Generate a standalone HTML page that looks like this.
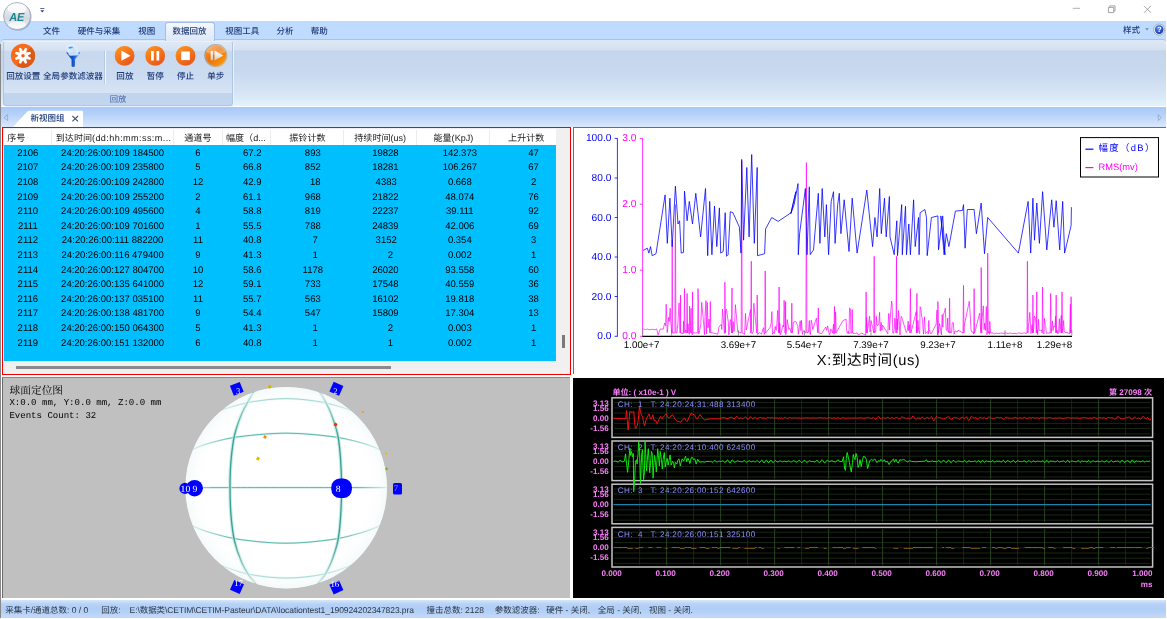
<!DOCTYPE html>
<html lang="zh-CN"><head><meta charset="utf-8"><title>AE</title>
<style>
html,body{margin:0;padding:0;background:#fff;}
body{width:1167px;height:619px;position:relative;overflow:hidden;font-family:"Liberation Sans","Noto Sans CJK SC",sans-serif;}
.t{position:absolute;white-space:pre;margin:0;padding:0;}
.b{position:absolute;box-sizing:border-box;}
svg{position:absolute;left:0;top:0;overflow:visible;}
svg text{white-space:pre;}
#root{position:absolute;left:0;top:0;width:1167px;height:619px;overflow:hidden;will-change:transform;text-rendering:geometricPrecision;}
</style></head><body><div id="root">
<div class="b" style="left:0px;top:21px;width:1166px;height:24px;background:#bfdbff;"></div>
<div class="b" style="left:1px;top:38.7px;width:1165px;height:67.8px;background:linear-gradient(#dee8f5 0px,#d5e1f2 9.6px,#c5d6ec 11px,#c8d9ee 32px,#d9e7f6 56px,#def0fb 62px,#e2f4fc 67px);border-top:1px solid #a6c3ec;border-radius:3px 3px 0 0;"></div>
<div class="b" style="left:0px;top:106.5px;width:1166px;height:0.9px;background:#9fbbdf;"></div>
<div class="b" style="left:0px;top:107.3px;width:1166px;height:19.7px;background:linear-gradient(#a6c9f8 0,#b4d1f9 7px,#d9e7fb 19.7px);"></div>
<div class="b" style="left:0px;top:43.6px;width:1px;height:574.2px;background:#888;"></div>
<div class="b" style="left:2.5px;top:41px;width:230.5px;height:65px;background:linear-gradient(#dfe9f6 0,#d6e2f2 8.2px,#c8d8ee 9.6px,#cbdbf0 33px,#d6e4f5 51px,#c0d4ee 51.5px,#c2d6ef 65px);border:1px solid #aec6e6;border-top-color:#e8f0fa;border-radius:3px;box-shadow:1px 1px 0 #e9f2fc;"></div>
<div class="b" style="left:105px;top:50.5px;width:1px;height:33px;background:#f4f8fd;box-shadow:-1px 0 0 #b5c9e4;"></div>
<div class="b" style="left:164.5px;top:22px;width:50px;height:19px;background:linear-gradient(#f4f8fe,#dde7f5);border:1px solid #a4bfe6;border-bottom:none;border-radius:3px 3px 0 0;"></div>
<svg width="1167" height="130" viewBox="0 0 1167 130">
<defs>
<linearGradient id="gApp" x1="0" y1="0" x2="0" y2="1"><stop offset="0" stop-color="#f3f5f9"/><stop offset="0.42" stop-color="#dde1ea"/><stop offset="0.58" stop-color="#d3d8e3"/><stop offset="0.82" stop-color="#e9ecf2"/><stop offset="1" stop-color="#fbfcfd"/></linearGradient>
<linearGradient id="gOr" x1="0" y1="0" x2="0.7" y2="1"><stop offset="0" stop-color="#ff9a1f"/><stop offset="0.55" stop-color="#f4741a"/><stop offset="1" stop-color="#e8561b"/></linearGradient>
<linearGradient id="gOr2" x1="0" y1="0" x2="1" y2="1"><stop offset="0" stop-color="#f59a3c"/><stop offset="0.45" stop-color="#ec7208"/><stop offset="0.8" stop-color="#f98e06"/><stop offset="1" stop-color="#ffbe10"/></linearGradient>
<linearGradient id="gRing" x1="0" y1="0" x2="1" y2="1"><stop offset="0" stop-color="#8f929e"/><stop offset="0.6" stop-color="#b7a692"/><stop offset="1" stop-color="#d9b98a"/></linearGradient>
<linearGradient id="gGly" x1="0" y1="0" x2="0" y2="1"><stop offset="0" stop-color="#fbfaf8"/><stop offset="0.5" stop-color="#eceae6"/><stop offset="1" stop-color="#c9c4bb"/></linearGradient>
<linearGradient id="gFun" x1="0" y1="0" x2="1" y2="0"><stop offset="0" stop-color="#1a5ad2"/><stop offset="0.45" stop-color="#1450c4"/><stop offset="0.75" stop-color="#2f78e6"/><stop offset="1" stop-color="#1a56c8"/></linearGradient>
<radialGradient id="gHelp" cx="0.4" cy="0.35" r="0.7"><stop offset="0" stop-color="#5b8df0"/><stop offset="1" stop-color="#1233a8"/></radialGradient>
<clipPath id="cGear"><circle cx="23" cy="55.8" r="12.1"/></clipPath>
</defs>
<circle cx="17.7" cy="16.9" r="13.9" fill="#7d8798" opacity="0.5"/>
<circle cx="17.1" cy="16" r="13.5" fill="url(#gApp)" stroke="#a0a9bb" stroke-width="0.9"/>
<ellipse cx="17.1" cy="8.6" rx="9.6" ry="5" fill="#ffffff" opacity="0.75"/>
<ellipse cx="17.1" cy="25" rx="9" ry="3.6" fill="#ffffff" opacity="0.5"/>
<text x="9.2" y="20.5" font-family="Liberation Sans,sans-serif" font-size="11.6" font-weight="bold" font-style="italic" fill="#1b888c" textLength="15.2" lengthAdjust="spacingAndGlyphs">AE</text>
<path d="M40.2 8.2h4.2v0.9h-4.2z M40.4 10.3h3.8l-1.9 2.3z" fill="#2a3f7a"/>
<path d="M1072.8 8.3h7.2" stroke="#a8a8a8" stroke-width="0.9" fill="none"/>
<path d="M1108.4 7.4h5.3v5.2h-5.3z M1109.8 7.2v-1.3h5.2v5.2h-1.2" stroke="#9a9a9a" stroke-width="0.9" fill="none"/>
<path d="M1144 5.8l7 7M1151 5.8l-7 7" stroke="#9a9a9a" stroke-width="0.9" fill="none"/>
<path d="M1145.2 28.2h3.6l-1.8 2.2z" fill="#6d86b8"/>
<circle cx="1159.2" cy="29.6" r="5.6" fill="#e9eef8" stroke="#9aa6bd" stroke-width="0.9"/>
<circle cx="1159.2" cy="29.6" r="4.3" fill="url(#gHelp)"/>
<text x="1159.3" y="32.4" text-anchor="middle" font-family="Liberation Sans,sans-serif" font-size="7.6" font-weight="bold" fill="#fff">?</text>
<circle cx="23" cy="55.8" r="12.1" fill="#fa6a1b"/>
<path clip-path="url(#cGear)" d="M23 55.8 L31 47.5 L40 58 L30 72 L17 66z" fill="#da5a18"/>
<path d="M23.26 50.91 L25.16 47.78 L27.14 48.61 L26.28 52.16 L26.64 52.52 L30.19 51.66 L31.02 53.64 L27.89 55.54 L27.89 56.06 L31.02 57.96 L30.19 59.94 L26.64 59.08 L26.28 59.44 L27.14 62.99 L25.16 63.82 L23.26 60.69 L22.74 60.69 L20.84 63.82 L18.86 62.99 L19.72 59.44 L19.36 59.08 L15.81 59.94 L14.98 57.96 L18.11 56.06 L18.11 55.54 L14.98 53.64 L15.81 51.66 L19.36 52.52 L19.72 52.16 L18.86 48.61 L20.84 47.78 L22.74 50.91z" fill="#fff"/>
<circle cx="23" cy="55.8" r="1.75" fill="#ea631b"/>
<path d="M66.1 52.5 L80.2 52.5 L75 59.4 L74.9 66.3 Q73.2 67.5 71.6 66.3 L71.5 59.4z" fill="url(#gFun)"/>
<path d="M74.2 59.6 L78.6 53.4 L79.6 53.2 L74.9 59.8z" fill="#6fa8f5" opacity="0.8"/>
<path d="M67.3 46.4 Q67.2 45.8 68 45.7 L73.2 45.2 Q75.4 45.4 76.9 47.6 L78.3 54 Q78.3 54.8 77.4 54.9 L70.4 55.3 Q69.4 55.2 69 54.4z" fill="#d3e6fb" fill-opacity="0.93" stroke="#eef6fe" stroke-width="0.7"/>
<path d="M68.5 47.1 L72.6 46.5 L72.9 48 L68.9 48.7z" fill="#3f9dfa"/>
<path d="M72.9 47.2 L74.4 54.6" stroke="#b9d6f7" stroke-width="0.7" fill="none"/>
<circle cx="124.6" cy="56.1" r="10" fill="#e0621a" opacity="0.35"/>
<circle cx="124.6" cy="55.7" r="9.8" fill="url(#gOr)"/>
<circle cx="155.2" cy="56.1" r="10" fill="#e0621a" opacity="0.35"/>
<circle cx="155.2" cy="55.7" r="9.8" fill="url(#gOr)"/>
<circle cx="185.5" cy="56.1" r="10" fill="#e0621a" opacity="0.35"/>
<circle cx="185.5" cy="55.7" r="9.8" fill="url(#gOr)"/>
<path d="M121.4 50.6 L130.6 55.7 L121.4 60.8z" fill="#fff"/>
<path d="M151.1 51h2.7v9.6h-2.7z M156.5 51h2.7v9.6h-2.7z" fill="#fff"/>
<path d="M181.2 51.5h8.6v8.6h-8.6z" fill="#fff"/>
<circle cx="215.8" cy="55.6" r="10.9" fill="#f29a3a" stroke="url(#gRing)" stroke-width="1.3"/>
<circle cx="215.8" cy="55.6" r="10.1" fill="url(#gOr2)"/>
<path d="M205.8 52 A10.3 10.3 0 0 1 225.8 52 Q215.8 57.5 205.8 52z" fill="#fff" opacity="0.28"/>
<path d="M210.7 51h2.2v9.3h-2.2z M214.5 50.6 L223.4 55.6 L214.5 60.6z" fill="url(#gGly)"/>
<path d="M12.8 127 L27.6 111.2 Q28 110.8 28.8 110.8 L82 110.8 Q83 110.8 83 111.8 L83 127z" fill="#fff"/>
<path d="M4 117.6 L7.6 114.6 L7.6 120.6z" fill="none" stroke="#8ea6cc" stroke-width="0.8"/>
<path d="M1158.3 114.6 L1161.4 117.6 L1158.3 120.6z" fill="none" stroke="#8ea6cc" stroke-width="0.8"/>
<path d="M72.4 116 L78 121.4 M78 116 L72.4 121.4" stroke="#44557a" stroke-width="1.1" fill="none"/>
</svg>
<div class="t" style="top:26.10px;font-size:8.5px;line-height:11.9px;color:#1e3a78;left:43.00px;font-weight:500;">文件</div>
<div class="t" style="top:26.10px;font-size:8.5px;line-height:11.9px;color:#1e3a78;left:77.80px;font-weight:500;">硬件与采集</div>
<div class="t" style="top:26.10px;font-size:8.5px;line-height:11.9px;color:#1e3a78;left:138.20px;font-weight:500;">视图</div>
<div class="t" style="top:26.10px;font-size:8.5px;line-height:11.9px;color:#1e3a78;left:172.60px;font-weight:500;">数据回放</div>
<div class="t" style="top:26.10px;font-size:8.5px;line-height:11.9px;color:#1e3a78;left:225.30px;font-weight:500;">视图工具</div>
<div class="t" style="top:26.10px;font-size:8.5px;line-height:11.9px;color:#1e3a78;left:276.60px;font-weight:500;">分析</div>
<div class="t" style="top:26.10px;font-size:8.5px;line-height:11.9px;color:#1e3a78;left:310.80px;font-weight:500;">帮助</div>
<div class="t" style="top:25.10px;font-size:8.5px;line-height:11.9px;color:#1e3a78;left:1123.00px;font-weight:500;">样式</div>
<div class="t" style="top:71.27px;font-size:8.55px;line-height:11.97px;color:#1e3a78;left:-276.70px;width:600px;text-align:center;font-weight:500;">回放设置</div>
<div class="t" style="top:71.27px;font-size:8.55px;line-height:11.97px;color:#1e3a78;left:-227.00px;width:600px;text-align:center;font-weight:500;">全局参数滤波器</div>
<div class="t" style="top:71.27px;font-size:8.55px;line-height:11.97px;color:#1e3a78;left:-175.10px;width:600px;text-align:center;font-weight:500;">回放</div>
<div class="t" style="top:71.27px;font-size:8.55px;line-height:11.97px;color:#1e3a78;left:-144.70px;width:600px;text-align:center;font-weight:500;">暂停</div>
<div class="t" style="top:71.27px;font-size:8.55px;line-height:11.97px;color:#1e3a78;left:-114.50px;width:600px;text-align:center;font-weight:500;">停止</div>
<div class="t" style="top:71.27px;font-size:8.55px;line-height:11.97px;color:#1e3a78;left:-84.20px;width:600px;text-align:center;font-weight:500;">单步</div>
<div class="t" style="top:94.44px;font-size:8.3px;line-height:11.62px;color:#3f5e9e;left:-182.00px;width:600px;text-align:center;">回放</div>
<div class="t" style="top:112.70px;font-size:8.5px;line-height:11.9px;color:#1e3a78;left:30.50px;font-weight:500;">新视图组</div>
<div class="b" style="left:2.4px;top:127px;width:568.4px;height:247.6px;border:1.8px solid #f00000;background:#f0f0f0;"></div>
<div class="b" style="left:4.2px;top:128.8px;width:552.2px;height:16px;background:#fff;"></div>
<div class="b" style="left:4.2px;top:144.7px;width:552.2px;height:216px;background:#00bfff;"></div>
<div class="b" style="left:561.6px;top:335.2px;width:3px;height:12.4px;background:#7a7a7a;"></div>
<div class="b" style="left:16px;top:365.8px;width:375px;height:2.9px;background:#8a8a8a;"></div>
<div class="b" style="left:51.1px;top:129.5px;width:1px;height:15px;background:#ececec;"></div>
<div class="b" style="left:172.9px;top:129.5px;width:1px;height:15px;background:#ececec;"></div>
<div class="b" style="left:221.9px;top:129.5px;width:1px;height:15px;background:#ececec;"></div>
<div class="b" style="left:269.7px;top:129.5px;width:1px;height:15px;background:#ececec;"></div>
<div class="b" style="left:343.3px;top:129.5px;width:1px;height:15px;background:#ececec;"></div>
<div class="b" style="left:415.7px;top:129.5px;width:1px;height:15px;background:#ececec;"></div>
<div class="b" style="left:488.9px;top:129.5px;width:1px;height:15px;background:#ececec;"></div>
<div class="t" style="top:131.91px;font-size:9.05px;line-height:12.67px;color:#1a1a1a;left:7.30px;">序号</div>
<div class="t" style="top:131.91px;font-size:9.05px;line-height:12.67px;color:#1a1a1a;left:55.80px;">到达时间<span style="letter-spacing:0.42px">(dd:hh:mm:ss:m...</span></div>
<div class="t" style="top:131.91px;font-size:9.05px;line-height:12.67px;color:#1a1a1a;left:-102.10px;width:600px;text-align:center;">通道号</div>
<div class="t" style="top:131.91px;font-size:9.05px;line-height:12.67px;color:#1a1a1a;left:226.00px;">幅度（d...</div>
<div class="t" style="top:131.91px;font-size:9.05px;line-height:12.67px;color:#1a1a1a;left:7.40px;width:600px;text-align:center;">振铃计数</div>
<div class="t" style="top:131.91px;font-size:9.05px;line-height:12.67px;color:#1a1a1a;left:80.20px;width:600px;text-align:center;">持续时间(us)</div>
<div class="t" style="top:131.91px;font-size:9.05px;line-height:12.67px;color:#1a1a1a;left:153.40px;width:600px;text-align:center;">能量(KpJ)</div>
<div class="t" style="top:131.91px;font-size:9.05px;line-height:12.67px;color:#1a1a1a;left:226.20px;width:600px;text-align:center;">上升计数</div>
<div class="t" style="top:146.85px;font-size:9.5px;line-height:13.3px;color:#000;left:-272.20px;width:600px;text-align:center;">2106</div>
<div class="t" style="top:146.85px;font-size:9.5px;line-height:13.3px;color:#000;left:-187.40px;width:600px;text-align:center;">24:20:26:00:109 184500</div>
<div class="t" style="top:146.85px;font-size:9.5px;line-height:13.3px;color:#000;left:-102.00px;width:600px;text-align:center;">6</div>
<div class="t" style="top:146.85px;font-size:9.5px;line-height:13.3px;color:#000;left:-47.80px;width:600px;text-align:center;">67.2</div>
<div class="t" style="top:146.85px;font-size:9.5px;line-height:13.3px;color:#000;left:12.80px;width:600px;text-align:center;">893</div>
<div class="t" style="top:146.85px;font-size:9.5px;line-height:13.3px;color:#000;left:85.40px;width:600px;text-align:center;">19828</div>
<div class="t" style="top:146.85px;font-size:9.5px;line-height:13.3px;color:#000;left:159.80px;width:600px;text-align:center;">142.373</div>
<div class="t" style="top:146.85px;font-size:9.5px;line-height:13.3px;color:#000;left:233.60px;width:600px;text-align:center;">47</div>
<div class="t" style="top:161.44px;font-size:9.5px;line-height:13.3px;color:#000;left:-272.20px;width:600px;text-align:center;">2107</div>
<div class="t" style="top:161.44px;font-size:9.5px;line-height:13.3px;color:#000;left:-187.40px;width:600px;text-align:center;">24:20:26:00:109 235800</div>
<div class="t" style="top:161.44px;font-size:9.5px;line-height:13.3px;color:#000;left:-102.00px;width:600px;text-align:center;">5</div>
<div class="t" style="top:161.44px;font-size:9.5px;line-height:13.3px;color:#000;left:-47.80px;width:600px;text-align:center;">66.8</div>
<div class="t" style="top:161.44px;font-size:9.5px;line-height:13.3px;color:#000;left:12.80px;width:600px;text-align:center;">852</div>
<div class="t" style="top:161.44px;font-size:9.5px;line-height:13.3px;color:#000;left:85.40px;width:600px;text-align:center;">18281</div>
<div class="t" style="top:161.44px;font-size:9.5px;line-height:13.3px;color:#000;left:159.80px;width:600px;text-align:center;">106.267</div>
<div class="t" style="top:161.44px;font-size:9.5px;line-height:13.3px;color:#000;left:233.60px;width:600px;text-align:center;">67</div>
<div class="t" style="top:176.04px;font-size:9.5px;line-height:13.3px;color:#000;left:-272.20px;width:600px;text-align:center;">2108</div>
<div class="t" style="top:176.04px;font-size:9.5px;line-height:13.3px;color:#000;left:-187.40px;width:600px;text-align:center;">24:20:26:00:109 242800</div>
<div class="t" style="top:176.04px;font-size:9.5px;line-height:13.3px;color:#000;left:-102.00px;width:600px;text-align:center;">12</div>
<div class="t" style="top:176.04px;font-size:9.5px;line-height:13.3px;color:#000;left:-47.80px;width:600px;text-align:center;">42.9</div>
<div class="t" style="top:176.04px;font-size:9.5px;line-height:13.3px;color:#000;left:15.20px;width:600px;text-align:center;">18</div>
<div class="t" style="top:176.04px;font-size:9.5px;line-height:13.3px;color:#000;left:86.20px;width:600px;text-align:center;">4383</div>
<div class="t" style="top:176.04px;font-size:9.5px;line-height:13.3px;color:#000;left:159.80px;width:600px;text-align:center;">0.668</div>
<div class="t" style="top:176.04px;font-size:9.5px;line-height:13.3px;color:#000;left:233.60px;width:600px;text-align:center;">2</div>
<div class="t" style="top:190.63px;font-size:9.5px;line-height:13.3px;color:#000;left:-272.20px;width:600px;text-align:center;">2109</div>
<div class="t" style="top:190.63px;font-size:9.5px;line-height:13.3px;color:#000;left:-187.40px;width:600px;text-align:center;">24:20:26:00:109 255200</div>
<div class="t" style="top:190.63px;font-size:9.5px;line-height:13.3px;color:#000;left:-102.00px;width:600px;text-align:center;">2</div>
<div class="t" style="top:190.63px;font-size:9.5px;line-height:13.3px;color:#000;left:-47.80px;width:600px;text-align:center;">61.1</div>
<div class="t" style="top:190.63px;font-size:9.5px;line-height:13.3px;color:#000;left:12.80px;width:600px;text-align:center;">968</div>
<div class="t" style="top:190.63px;font-size:9.5px;line-height:13.3px;color:#000;left:85.40px;width:600px;text-align:center;">21822</div>
<div class="t" style="top:190.63px;font-size:9.5px;line-height:13.3px;color:#000;left:159.80px;width:600px;text-align:center;">48.074</div>
<div class="t" style="top:190.63px;font-size:9.5px;line-height:13.3px;color:#000;left:233.60px;width:600px;text-align:center;">76</div>
<div class="t" style="top:205.22px;font-size:9.5px;line-height:13.3px;color:#000;left:-272.20px;width:600px;text-align:center;">2110</div>
<div class="t" style="top:205.22px;font-size:9.5px;line-height:13.3px;color:#000;left:-187.40px;width:600px;text-align:center;">24:20:26:00:109 495600</div>
<div class="t" style="top:205.22px;font-size:9.5px;line-height:13.3px;color:#000;left:-102.00px;width:600px;text-align:center;">4</div>
<div class="t" style="top:205.22px;font-size:9.5px;line-height:13.3px;color:#000;left:-47.80px;width:600px;text-align:center;">58.8</div>
<div class="t" style="top:205.22px;font-size:9.5px;line-height:13.3px;color:#000;left:12.80px;width:600px;text-align:center;">819</div>
<div class="t" style="top:205.22px;font-size:9.5px;line-height:13.3px;color:#000;left:85.40px;width:600px;text-align:center;">22237</div>
<div class="t" style="top:205.22px;font-size:9.5px;line-height:13.3px;color:#000;left:159.80px;width:600px;text-align:center;">39.111</div>
<div class="t" style="top:205.22px;font-size:9.5px;line-height:13.3px;color:#000;left:233.60px;width:600px;text-align:center;">92</div>
<div class="t" style="top:219.81px;font-size:9.5px;line-height:13.3px;color:#000;left:-272.20px;width:600px;text-align:center;">2111</div>
<div class="t" style="top:219.81px;font-size:9.5px;line-height:13.3px;color:#000;left:-187.40px;width:600px;text-align:center;">24:20:26:00:109 701600</div>
<div class="t" style="top:219.81px;font-size:9.5px;line-height:13.3px;color:#000;left:-102.00px;width:600px;text-align:center;">1</div>
<div class="t" style="top:219.81px;font-size:9.5px;line-height:13.3px;color:#000;left:-47.80px;width:600px;text-align:center;">55.5</div>
<div class="t" style="top:219.81px;font-size:9.5px;line-height:13.3px;color:#000;left:12.80px;width:600px;text-align:center;">788</div>
<div class="t" style="top:219.81px;font-size:9.5px;line-height:13.3px;color:#000;left:85.40px;width:600px;text-align:center;">24839</div>
<div class="t" style="top:219.81px;font-size:9.5px;line-height:13.3px;color:#000;left:159.80px;width:600px;text-align:center;">42.006</div>
<div class="t" style="top:219.81px;font-size:9.5px;line-height:13.3px;color:#000;left:233.60px;width:600px;text-align:center;">69</div>
<div class="t" style="top:234.41px;font-size:9.5px;line-height:13.3px;color:#000;left:-272.20px;width:600px;text-align:center;">2112</div>
<div class="t" style="top:234.41px;font-size:9.5px;line-height:13.3px;color:#000;left:-187.40px;width:600px;text-align:center;">24:20:26:00:111 882200</div>
<div class="t" style="top:234.41px;font-size:9.5px;line-height:13.3px;color:#000;left:-102.00px;width:600px;text-align:center;">11</div>
<div class="t" style="top:234.41px;font-size:9.5px;line-height:13.3px;color:#000;left:-47.80px;width:600px;text-align:center;">40.8</div>
<div class="t" style="top:234.41px;font-size:9.5px;line-height:13.3px;color:#000;left:15.20px;width:600px;text-align:center;">7</div>
<div class="t" style="top:234.41px;font-size:9.5px;line-height:13.3px;color:#000;left:86.20px;width:600px;text-align:center;">3152</div>
<div class="t" style="top:234.41px;font-size:9.5px;line-height:13.3px;color:#000;left:159.80px;width:600px;text-align:center;">0.354</div>
<div class="t" style="top:234.41px;font-size:9.5px;line-height:13.3px;color:#000;left:233.60px;width:600px;text-align:center;">3</div>
<div class="t" style="top:249.00px;font-size:9.5px;line-height:13.3px;color:#000;left:-272.20px;width:600px;text-align:center;">2113</div>
<div class="t" style="top:249.00px;font-size:9.5px;line-height:13.3px;color:#000;left:-187.40px;width:600px;text-align:center;">24:20:26:00:116 479400</div>
<div class="t" style="top:249.00px;font-size:9.5px;line-height:13.3px;color:#000;left:-102.00px;width:600px;text-align:center;">9</div>
<div class="t" style="top:249.00px;font-size:9.5px;line-height:13.3px;color:#000;left:-47.80px;width:600px;text-align:center;">41.3</div>
<div class="t" style="top:249.00px;font-size:9.5px;line-height:13.3px;color:#000;left:15.20px;width:600px;text-align:center;">1</div>
<div class="t" style="top:249.00px;font-size:9.5px;line-height:13.3px;color:#000;left:90.40px;width:600px;text-align:center;">2</div>
<div class="t" style="top:249.00px;font-size:9.5px;line-height:13.3px;color:#000;left:159.80px;width:600px;text-align:center;">0.002</div>
<div class="t" style="top:249.00px;font-size:9.5px;line-height:13.3px;color:#000;left:233.60px;width:600px;text-align:center;">1</div>
<div class="t" style="top:263.59px;font-size:9.5px;line-height:13.3px;color:#000;left:-272.20px;width:600px;text-align:center;">2114</div>
<div class="t" style="top:263.59px;font-size:9.5px;line-height:13.3px;color:#000;left:-187.40px;width:600px;text-align:center;">24:20:26:00:127 804700</div>
<div class="t" style="top:263.59px;font-size:9.5px;line-height:13.3px;color:#000;left:-102.00px;width:600px;text-align:center;">10</div>
<div class="t" style="top:263.59px;font-size:9.5px;line-height:13.3px;color:#000;left:-47.80px;width:600px;text-align:center;">58.6</div>
<div class="t" style="top:263.59px;font-size:9.5px;line-height:13.3px;color:#000;left:12.80px;width:600px;text-align:center;">1178</div>
<div class="t" style="top:263.59px;font-size:9.5px;line-height:13.3px;color:#000;left:85.40px;width:600px;text-align:center;">26020</div>
<div class="t" style="top:263.59px;font-size:9.5px;line-height:13.3px;color:#000;left:159.80px;width:600px;text-align:center;">93.558</div>
<div class="t" style="top:263.59px;font-size:9.5px;line-height:13.3px;color:#000;left:233.60px;width:600px;text-align:center;">60</div>
<div class="t" style="top:278.19px;font-size:9.5px;line-height:13.3px;color:#000;left:-272.20px;width:600px;text-align:center;">2115</div>
<div class="t" style="top:278.19px;font-size:9.5px;line-height:13.3px;color:#000;left:-187.40px;width:600px;text-align:center;">24:20:26:00:135 641000</div>
<div class="t" style="top:278.19px;font-size:9.5px;line-height:13.3px;color:#000;left:-102.00px;width:600px;text-align:center;">12</div>
<div class="t" style="top:278.19px;font-size:9.5px;line-height:13.3px;color:#000;left:-47.80px;width:600px;text-align:center;">59.1</div>
<div class="t" style="top:278.19px;font-size:9.5px;line-height:13.3px;color:#000;left:12.80px;width:600px;text-align:center;">733</div>
<div class="t" style="top:278.19px;font-size:9.5px;line-height:13.3px;color:#000;left:85.40px;width:600px;text-align:center;">17548</div>
<div class="t" style="top:278.19px;font-size:9.5px;line-height:13.3px;color:#000;left:159.80px;width:600px;text-align:center;">40.559</div>
<div class="t" style="top:278.19px;font-size:9.5px;line-height:13.3px;color:#000;left:233.60px;width:600px;text-align:center;">36</div>
<div class="t" style="top:292.78px;font-size:9.5px;line-height:13.3px;color:#000;left:-272.20px;width:600px;text-align:center;">2116</div>
<div class="t" style="top:292.78px;font-size:9.5px;line-height:13.3px;color:#000;left:-187.40px;width:600px;text-align:center;">24:20:26:00:137 035100</div>
<div class="t" style="top:292.78px;font-size:9.5px;line-height:13.3px;color:#000;left:-102.00px;width:600px;text-align:center;">11</div>
<div class="t" style="top:292.78px;font-size:9.5px;line-height:13.3px;color:#000;left:-47.80px;width:600px;text-align:center;">55.7</div>
<div class="t" style="top:292.78px;font-size:9.5px;line-height:13.3px;color:#000;left:12.80px;width:600px;text-align:center;">563</div>
<div class="t" style="top:292.78px;font-size:9.5px;line-height:13.3px;color:#000;left:85.40px;width:600px;text-align:center;">16102</div>
<div class="t" style="top:292.78px;font-size:9.5px;line-height:13.3px;color:#000;left:159.80px;width:600px;text-align:center;">19.818</div>
<div class="t" style="top:292.78px;font-size:9.5px;line-height:13.3px;color:#000;left:233.60px;width:600px;text-align:center;">38</div>
<div class="t" style="top:307.37px;font-size:9.5px;line-height:13.3px;color:#000;left:-272.20px;width:600px;text-align:center;">2117</div>
<div class="t" style="top:307.37px;font-size:9.5px;line-height:13.3px;color:#000;left:-187.40px;width:600px;text-align:center;">24:20:26:00:138 481700</div>
<div class="t" style="top:307.37px;font-size:9.5px;line-height:13.3px;color:#000;left:-102.00px;width:600px;text-align:center;">9</div>
<div class="t" style="top:307.37px;font-size:9.5px;line-height:13.3px;color:#000;left:-47.80px;width:600px;text-align:center;">54.4</div>
<div class="t" style="top:307.37px;font-size:9.5px;line-height:13.3px;color:#000;left:12.80px;width:600px;text-align:center;">547</div>
<div class="t" style="top:307.37px;font-size:9.5px;line-height:13.3px;color:#000;left:85.40px;width:600px;text-align:center;">15809</div>
<div class="t" style="top:307.37px;font-size:9.5px;line-height:13.3px;color:#000;left:159.80px;width:600px;text-align:center;">17.304</div>
<div class="t" style="top:307.37px;font-size:9.5px;line-height:13.3px;color:#000;left:233.60px;width:600px;text-align:center;">13</div>
<div class="t" style="top:321.97px;font-size:9.5px;line-height:13.3px;color:#000;left:-272.20px;width:600px;text-align:center;">2118</div>
<div class="t" style="top:321.97px;font-size:9.5px;line-height:13.3px;color:#000;left:-187.40px;width:600px;text-align:center;">24:20:26:00:150 064300</div>
<div class="t" style="top:321.97px;font-size:9.5px;line-height:13.3px;color:#000;left:-102.00px;width:600px;text-align:center;">5</div>
<div class="t" style="top:321.97px;font-size:9.5px;line-height:13.3px;color:#000;left:-47.80px;width:600px;text-align:center;">41.3</div>
<div class="t" style="top:321.97px;font-size:9.5px;line-height:13.3px;color:#000;left:15.20px;width:600px;text-align:center;">1</div>
<div class="t" style="top:321.97px;font-size:9.5px;line-height:13.3px;color:#000;left:90.40px;width:600px;text-align:center;">2</div>
<div class="t" style="top:321.97px;font-size:9.5px;line-height:13.3px;color:#000;left:159.80px;width:600px;text-align:center;">0.003</div>
<div class="t" style="top:321.97px;font-size:9.5px;line-height:13.3px;color:#000;left:233.60px;width:600px;text-align:center;">1</div>
<div class="t" style="top:336.56px;font-size:9.5px;line-height:13.3px;color:#000;left:-272.20px;width:600px;text-align:center;">2119</div>
<div class="t" style="top:336.56px;font-size:9.5px;line-height:13.3px;color:#000;left:-187.40px;width:600px;text-align:center;">24:20:26:00:151 132000</div>
<div class="t" style="top:336.56px;font-size:9.5px;line-height:13.3px;color:#000;left:-102.00px;width:600px;text-align:center;">6</div>
<div class="t" style="top:336.56px;font-size:9.5px;line-height:13.3px;color:#000;left:-47.80px;width:600px;text-align:center;">40.8</div>
<div class="t" style="top:336.56px;font-size:9.5px;line-height:13.3px;color:#000;left:15.20px;width:600px;text-align:center;">1</div>
<div class="t" style="top:336.56px;font-size:9.5px;line-height:13.3px;color:#000;left:90.40px;width:600px;text-align:center;">1</div>
<div class="t" style="top:336.56px;font-size:9.5px;line-height:13.3px;color:#000;left:159.80px;width:600px;text-align:center;">0.002</div>
<div class="t" style="top:336.56px;font-size:9.5px;line-height:13.3px;color:#000;left:233.60px;width:600px;text-align:center;">1</div>
<div class="b" style="left:573px;top:127.2px;width:593px;height:247.2px;background:#fff;border-left:1px solid #6e6e6e;border-top:1px solid #6e6e6e;"></div>
<svg width="1167" height="619" viewBox="0 0 1167 619">
<path d="M617.4 138.2V336.6" stroke="#0000ff" stroke-width="0.8" fill="none"/>
<path d="M642.6 138.2V336.6" stroke="#ff00ff" stroke-width="0.8" fill="none"/>
<path d="M642.2 336.4H1072" stroke="#000" stroke-width="1.1" fill="none"/>
<path d="M614.6 138.4h2.8" stroke="#0000ff" stroke-width="0.8"/>
<text x="611.4" y="141.4" text-anchor="end" font-family="Liberation Sans,sans-serif" font-size="10.2" fill="#0000ff">100.0</text>
<path d="M614.6 178h2.8" stroke="#0000ff" stroke-width="0.8"/>
<text x="611.4" y="181.0" text-anchor="end" font-family="Liberation Sans,sans-serif" font-size="10.2" fill="#0000ff">80.0</text>
<path d="M614.6 217.5h2.8" stroke="#0000ff" stroke-width="0.8"/>
<text x="611.4" y="220.5" text-anchor="end" font-family="Liberation Sans,sans-serif" font-size="10.2" fill="#0000ff">60.0</text>
<path d="M614.6 257h2.8" stroke="#0000ff" stroke-width="0.8"/>
<text x="611.4" y="260.0" text-anchor="end" font-family="Liberation Sans,sans-serif" font-size="10.2" fill="#0000ff">40.0</text>
<path d="M614.6 296.5h2.8" stroke="#0000ff" stroke-width="0.8"/>
<text x="611.4" y="299.5" text-anchor="end" font-family="Liberation Sans,sans-serif" font-size="10.2" fill="#0000ff">20.0</text>
<path d="M614.6 336.3h2.8" stroke="#0000ff" stroke-width="0.8"/>
<text x="611.4" y="339.3" text-anchor="end" font-family="Liberation Sans,sans-serif" font-size="10.2" fill="#0000ff">0.0</text>
<path d="M639.8 138.4h2.8" stroke="#ff00ff" stroke-width="0.8"/>
<text x="636.4" y="141.4" text-anchor="end" font-family="Liberation Sans,sans-serif" font-size="10.2" fill="#ff00ff">3.0</text>
<path d="M639.8 204.2h2.8" stroke="#ff00ff" stroke-width="0.8"/>
<text x="636.4" y="207.2" text-anchor="end" font-family="Liberation Sans,sans-serif" font-size="10.2" fill="#ff00ff">2.0</text>
<path d="M639.8 270.2h2.8" stroke="#ff00ff" stroke-width="0.8"/>
<text x="636.4" y="273.2" text-anchor="end" font-family="Liberation Sans,sans-serif" font-size="10.2" fill="#ff00ff">1.0</text>
<path d="M639.8 336.3h2.8" stroke="#ff00ff" stroke-width="0.8"/>
<text x="636.4" y="339.3" text-anchor="end" font-family="Liberation Sans,sans-serif" font-size="10.2" fill="#ff00ff">0.0</text>
<path d="M642.6 330.2v5.7" stroke="#8c8c8c" stroke-width="0.9"/>
<text x="641.6" y="348.1" text-anchor="middle" font-family="Liberation Sans,sans-serif" font-size="9.75" fill="#000">1.00e+7</text>
<path d="M738.4 330.2v5.7" stroke="#8c8c8c" stroke-width="0.9"/>
<text x="738.4" y="348.1" text-anchor="middle" font-family="Liberation Sans,sans-serif" font-size="9.75" fill="#000">3.69e+7</text>
<path d="M804.6 330.2v5.7" stroke="#8c8c8c" stroke-width="0.9"/>
<text x="804.6" y="348.1" text-anchor="middle" font-family="Liberation Sans,sans-serif" font-size="9.75" fill="#000">5.54e+7</text>
<path d="M871 330.2v5.7" stroke="#8c8c8c" stroke-width="0.9"/>
<text x="871" y="348.1" text-anchor="middle" font-family="Liberation Sans,sans-serif" font-size="9.75" fill="#000">7.39e+7</text>
<path d="M938 330.2v5.7" stroke="#8c8c8c" stroke-width="0.9"/>
<text x="938" y="348.1" text-anchor="middle" font-family="Liberation Sans,sans-serif" font-size="9.75" fill="#000">9.23e+7</text>
<path d="M1005 330.2v5.7" stroke="#8c8c8c" stroke-width="0.9"/>
<text x="1005" y="348.1" text-anchor="middle" font-family="Liberation Sans,sans-serif" font-size="9.75" fill="#000">1.11e+8</text>
<path d="M1071.8 330.2v5.7" stroke="#8c8c8c" stroke-width="0.9"/>
<text x="1054.5" y="348.1" text-anchor="middle" font-family="Liberation Sans,sans-serif" font-size="9.75" fill="#000">1.29e+8</text>
<path d="M671.6 330.2v5.7" stroke="#8c8c8c" stroke-width="0.9"/>
<polyline points="643.2,329.0 645.3,329.4 646.8,329.4 647.8,328.9 648.9,329.8 650.0,329.6 652.6,329.3 655.2,329.8 656.7,328.9 658.1,334.9 660.1,329.2 662.0,328.9 663.2,329.3 664.7,323.0 665.6,325.7 666.2,304.2 667.2,332.6 667.7,328.4 668.5,317.5 669.3,321.4 670.2,308.3 670.6,320.5 671.8,332.9 672.2,240.2 672.7,332.9 674.9,332.9 675.4,204.6 675.9,332.9 677.0,332.8 677.4,326.7 677.7,327.2 678.4,314.6 679.1,302.8 680.1,332.9 680.6,295.1 680.6,332.9 681.1,332.9 683.1,333.9 683.6,321.2 683.9,332.9 684.0,332.9 684.5,288.6 684.9,322.2 685.0,332.9 685.7,330.0 686.6,332.9 687.1,293.5 687.6,332.9 688.0,323.8 688.4,328.1 688.9,333.0 689.3,334.3 689.6,306.1 690.2,332.9 691.1,308.4 691.5,333.0 692.0,332.9 692.3,334.8 692.5,291.9 693.0,332.9 697.5,332.9 697.7,331.9 698.0,288.6 698.4,302.1 698.5,332.9 698.9,334.0 700.8,324.6 701.7,302.3 703.9,326.0 704.5,334.7 705.0,316.5 706.0,300.6 706.5,333.8 707.3,302.5 708.0,327.8 709.0,319.1 709.4,324.6 709.8,332.9 710.3,301.6 710.8,332.9 711.9,332.7 717.9,334.2 718.9,327.0 721.3,324.3 721.8,329.6 722.5,309.0 724.4,332.9 724.7,333.5 724.9,282.2 725.3,325.5 725.4,332.9 725.7,310.2 726.4,309.2 728.3,322.1 728.9,334.9 730.3,319.5 730.9,321.7 731.5,332.9 732.0,288.0 732.2,325.7 732.5,332.9 733.1,321.6 734.0,331.5 734.7,323.0 735.4,304.7 737.8,331.8 741.2,332.9 741.7,161.0 742.2,332.9 744.2,334.2 744.6,334.5 745.5,313.4 746.3,330.0 750.5,309.5 750.8,332.9 751.3,261.2 751.5,326.8 751.8,332.9 752.2,333.8 753.0,331.9 753.4,331.5 753.8,303.3 756.8,332.9 757.2,295.1 757.7,332.9 757.7,334.7 759.2,332.6 761.5,334.1 763.4,327.7 764.2,334.5 764.8,332.9 765.2,270.9 765.7,332.9 769.9,327.8 771.2,323.0 771.9,311.6 772.6,334.3 773.0,333.2 773.8,332.1 774.4,333.5 775.2,326.4 776.2,330.4 776.9,323.8 777.7,310.4 778.6,332.9 779.1,287.0 779.6,332.9 779.8,323.6 780.2,334.5 780.7,334.4 783.0,325.2 783.6,326.9 784.1,300.3 784.6,310.9 784.9,332.3 785.1,332.9 785.4,328.8 785.6,301.6 785.8,334.7 786.1,332.9 786.4,331.7 787.2,319.6 788.9,329.5 789.8,328.3 791.3,332.9 791.8,303.2 792.1,319.4 792.2,332.9 793.5,322.3 795.7,321.3 797.8,325.9 798.3,334.3 800.2,320.8 800.9,330.5 801.5,320.3 802.4,334.5 803.2,330.8 805.9,332.9 806.4,162.6 806.9,332.9 808.4,332.3 809.3,320.5 809.7,330.8 810.4,334.6 811.2,320.1 811.9,322.8 812.8,329.5 816.4,318.2 817.8,332.9 818.3,308.0 818.8,332.9 821.5,333.7 825.7,327.1 826.7,330.4 827.6,325.9 829.4,334.9 830.1,334.1 830.6,328.9 831.5,329.8 832.5,332.9 833.5,324.2 834.0,334.3 834.0,332.9 834.5,306.4 835.0,332.9 835.6,311.9 836.2,332.8 842.8,320.7 845.3,319.5 846.1,319.1 846.6,329.8 847.3,333.3 848.3,331.3 849.0,334.0 849.5,307.9 850.4,308.7 850.9,333.2 851.8,332.9 851.9,333.1 852.2,309.6 852.7,332.9 853.9,333.5 855.5,333.4 857.1,332.9 858.5,335.1 860.3,333.8 861.6,333.1 863.2,333.9 865.6,335.3 865.6,332.9 866.1,291.9 866.6,332.9 866.6,317.3 867.3,332.7 869.6,316.3 870.0,332.0 871.0,320.5 872.8,328.4 873.8,332.9 874.2,256.3 874.3,305.6 874.7,332.9 874.7,331.4 875.1,332.0 875.7,331.6 876.3,316.4 877.2,325.8 878.2,324.9 878.8,323.4 879.6,312.3 880.2,331.1 881.1,322.3 882.0,330.4 882.5,325.1 887.8,333.7 888.6,313.6 889.0,313.6 889.4,330.0 891.6,301.0 892.1,304.0 892.8,332.8 893.3,333.4 894.3,329.6 894.9,318.2 895.2,324.1 896.0,332.9 896.5,256.3 896.7,330.0 897.0,332.9 897.3,318.9 897.7,329.8 898.5,310.5 899.5,325.5 900.0,334.9 901.0,316.6 901.5,316.5 906.3,332.5 907.3,330.5 908.2,321.0 908.7,330.6 909.2,325.7 909.6,324.7 909.9,332.9 910.4,288.6 910.9,332.9 916.2,311.7 916.4,332.9 916.6,319.7 916.9,293.5 917.1,331.5 917.4,332.9 917.9,320.3 918.8,331.8 919.7,333.5 920.1,306.6 920.7,307.8 921.6,316.0 922.2,318.0 923.5,334.2 924.5,316.8 925.4,333.5 927.8,331.6 928.3,334.1 928.8,320.4 929.2,331.2 929.7,330.5 930.1,332.7 930.9,334.0 931.5,333.2 936.1,324.3 937.0,310.1 937.4,332.9 937.8,334.9 937.9,301.6 938.4,332.9 939.6,323.6 941.4,334.8 942.2,314.5 942.8,327.0 943.4,314.2 944.3,312.7 945.3,308.2 946.2,329.9 947.1,330.6 947.7,318.1 948.2,332.1 948.7,330.9 949.1,332.9 949.6,298.3 949.9,319.1 950.1,332.9 950.8,331.6 951.6,332.6 952.2,323.1 952.5,322.5 953.4,322.9 954.1,334.2 954.5,332.1 955.2,330.9 957.1,332.1 958.1,330.2 963.0,332.9 963.5,285.4 964.0,332.9 964.1,326.4 969.3,301.2 970.2,314.9 971.0,330.0 971.9,332.1 973.4,332.1 973.6,332.9 973.8,334.0 974.1,288.6 974.6,332.9 979.7,313.2 980.8,332.9 981.0,320.6 981.2,267.6 981.7,332.9 981.9,321.4 983.3,305.8 984.1,329.5 984.7,323.2 985.5,330.4 986.3,306.5 986.9,334.7 987.2,332.9 987.6,332.1 987.7,253.1 988.2,332.9 989.0,331.3 989.3,334.3 989.8,321.2 990.6,333.0 993.2,333.0 994.2,333.8 996.5,333.1 997.5,333.5 999.0,333.3 1001.6,333.1 1004.1,333.4 1005.7,332.9 1008.0,333.5 1010.6,333.0 1012.6,333.6 1015.0,333.2 1016.4,333.9 1018.7,332.8 1021.2,333.4 1023.4,333.1 1024.5,332.8 1026.0,333.6 1027.0,332.9 1027.4,261.2 1027.9,332.9 1028.4,325.4 1029.1,322.1 1029.8,312.4 1031.0,333.6 1032.0,324.7 1032.5,332.9 1032.9,295.1 1033.4,332.9 1033.6,329.9 1034.4,316.2 1035.3,317.8 1036.1,324.9 1036.3,332.9 1036.8,291.9 1036.9,329.9 1037.2,332.9 1037.3,329.8 1037.7,334.7 1038.5,319.3 1039.2,330.4 1041.6,330.1 1042.1,332.9 1042.6,287.0 1043.0,332.9 1044.0,333.8 1044.4,318.3 1045.3,325.2 1045.7,326.2 1046.3,333.5 1047.1,333.1 1050.2,332.9 1050.7,293.5 1051.2,332.9 1052.4,320.9 1053.0,330.6 1053.8,326.1 1055.1,326.7 1055.6,316.2 1055.8,332.9 1056.2,295.1 1056.3,318.5 1056.7,332.9 1056.9,330.3 1057.9,333.7 1058.6,331.4 1059.4,318.7 1060.0,332.7 1061.3,315.5 1061.5,332.9 1061.9,307.9 1062.0,291.9 1062.5,332.9 1062.8,332.4 1063.6,320.5 1064.2,330.3 1065.0,332.5 1067.0,332.4 1068.5,333.2 1069.4,334.0 1069.9,326.8 1070.4,304.2 1070.6,332.9 1071.1,296.7 1071.4,332.8 1071.5,332.9" fill="none" stroke="#ff00ff" stroke-width="0.68" stroke-linejoin="round"/>
<polyline points="643.1,250.5 647.3,248.2 648.9,253.1 650.5,246.6 652.2,255.7 656.0,253.7 665.1,194.9 667.3,243.4 669.9,198.2 672.2,246.6 675.4,186.2 678.0,224.0 679.6,220.8 681.2,253.1 683.5,252.4 684.5,191.1 687.1,220.8 689.3,201.4 692.5,224.0 695.8,193.3 700.6,236.9 705.5,188.5 707.7,255.7 709.7,201.4 711.9,254.7 714.5,206.2 716.8,246.6 719.4,207.9 720.7,253.1 723.2,251.5 725.2,212.7 726.5,256.3 728.1,254.7 730.3,211.7 732.9,212.7 739.4,227.2 741.0,253.1 741.7,159.4 743.6,240.2 746.8,167.5 749.1,236.9 751.7,154.5 754.3,243.4 757.2,167.5 757.5,255.7 764.6,253.7 765.6,228.9 771.7,217.5 778.2,221.4 791.1,212.7 795.9,191.7 790.8,213.7 794.1,204.6 798.0,183.6 798.3,254.7 799.6,233.7 805.4,188.5 807.0,254.7 809.3,186.8 810.2,254.7 813.5,249.9 818.3,193.3 819.9,243.4 822.2,188.5 824.8,236.9 826.4,204.6 828.6,254.7 831.2,201.4 833.5,191.7 835.1,243.4 837.7,204.6 839.3,193.3 840.9,233.7 844.2,199.8 849.0,251.5 852.2,198.2 857.1,253.1 866.8,190.1 872.6,246.6 874.9,217.5 877.1,236.9 879.7,188.5 881.3,233.7 884.5,198.2 886.2,236.9 889.4,196.5 890.0,236.9 894.2,254.7 896.8,220.8 897.5,255.7 901.7,204.6 902.3,254.7 905.5,206.2 906.5,254.7 908.8,224.0 910.4,254.7 913.6,199.8 915.2,246.6 918.5,217.5 919.1,254.7 920.1,212.7 924.9,209.5 926.5,217.5 927.2,255.7 931.4,217.5 937.9,215.9 938.5,249.9 942.7,215.9 945.0,254.7 940.8,215.9 944.1,254.7 946.3,233.7 948.9,246.6 955.4,211.1 962.5,210.4 963.5,204.6 965.1,248.2 967.3,209.5 974.1,209.5 976.4,233.7 981.2,203.0 984.5,253.7 987.7,217.5 1018.4,253.1 1028.1,201.4 1030.7,253.1 1032.9,198.2 1034.5,240.2 1036.8,203.0 1039.4,243.4 1042.6,191.7 1046.8,249.9 1051.7,199.8 1053.9,227.2 1056.2,200.7 1059.7,249.9 1062.7,201.4 1064.6,253.1 1066.9,243.4 1071.1,225.6 1071.4,207.2" fill="none" stroke="#0000ff" stroke-width="0.78" stroke-linejoin="round"/>
<text x="868.6" y="364.6" text-anchor="middle" font-family="Liberation Sans,Noto Sans CJK SC,sans-serif" font-size="14.6" letter-spacing="0.62" fill="#000">X:到达时间(us)</text>
<rect x="1080.5" y="137.6" width="78" height="39.4" fill="#fff" stroke="#000" stroke-width="1"/>
<path d="M1085.4 149.2h8" stroke="#0000ff" stroke-width="1.2"/><path d="M1085.4 167.6h8" stroke="#ff00ff" stroke-width="1.2"/>
<text x="1098.6" y="151.4" font-family="Liberation Sans,Noto Sans CJK SC,sans-serif" font-size="9.4" letter-spacing="1.35" fill="#0000ff">幅度（dB）</text>
<text x="1098.6" y="170.2" font-family="Liberation Sans,sans-serif" font-size="9.3" fill="#ff00ff">RMS(mv)</text>
</svg>
<div class="b" style="left:2.2px;top:377px;width:567.6px;height:220.8px;background:#c0c0c0;border-left:1px solid #6a6a6a;border-top:1px solid #8a8a8a;"></div>
<svg width="1167" height="619" viewBox="0 0 1167 619">
<defs><radialGradient id="gSph" cx="0.5" cy="0.5" r="0.5"><stop offset="0" stop-color="#ffffff"/><stop offset="0.86" stop-color="#ffffff"/><stop offset="0.95" stop-color="#fafdfd"/><stop offset="1" stop-color="#f3f8f8"/></radialGradient>
<radialGradient id="gFade" cx="0.5" cy="0.5" r="0.5"><stop offset="0" stop-color="#fff" stop-opacity="0"/><stop offset="0.72" stop-color="#fff" stop-opacity="0"/><stop offset="0.93" stop-color="#fbfdfd" stop-opacity="0.55"/><stop offset="1" stop-color="#f4f9f9" stop-opacity="0.8"/></radialGradient>
<clipPath id="cSph"><circle cx="286.2" cy="487.7" r="100.8"/></clipPath></defs>
<circle cx="286.2" cy="487.7" r="100.8" fill="url(#gSph)"/>
<g clip-path="url(#cSph)" fill="none">
<path d="M186.0 487.6 C219.4 487.6 353.0 487.6 386.4 487.6" stroke="#c6e9e4" stroke-width="2.2" opacity="0.6"/>
<path d="M186.0 487.6 C219.4 487.6 353.0 487.6 386.4 487.6" stroke="#3fae9f" stroke-width="0.85"/>
<path d="M191.0 450.0 C194.2 448.8 201.8 445.2 210.0 443.0 C218.2 440.8 227.3 438.2 240.0 436.6 C252.7 435.0 270.7 433.2 286.0 433.2 C301.3 433.2 319.3 435.0 332.0 436.6 C344.7 438.2 353.8 440.8 362.0 443.0 C370.2 445.2 377.8 448.8 381.0 450.0" stroke="#c6e9e4" stroke-width="2.2" opacity="0.6"/>
<path d="M191.0 450.0 C194.2 448.8 201.8 445.2 210.0 443.0 C218.2 440.8 227.3 438.2 240.0 436.6 C252.7 435.0 270.7 433.2 286.0 433.2 C301.3 433.2 319.3 435.0 332.0 436.6 C344.7 438.2 353.8 440.8 362.0 443.0 C370.2 445.2 377.8 448.8 381.0 450.0" stroke="#3fae9f" stroke-width="0.85"/>
<path d="M191.0 525.5 C194.2 526.7 201.8 530.2 210.0 532.5 C218.2 534.8 227.3 537.7 240.0 539.5 C252.7 541.3 270.7 543.2 286.0 543.2 C301.3 543.2 319.3 541.3 332.0 539.5 C344.7 537.7 353.8 534.8 362.0 532.5 C370.2 530.2 377.8 526.7 381.0 525.5" stroke="#c6e9e4" stroke-width="2.2" opacity="0.6"/>
<path d="M191.0 525.5 C194.2 526.7 201.8 530.2 210.0 532.5 C218.2 534.8 227.3 537.7 240.0 539.5 C252.7 541.3 270.7 543.2 286.0 543.2 C301.3 543.2 319.3 541.3 332.0 539.5 C344.7 537.7 353.8 534.8 362.0 532.5 C370.2 530.2 377.8 526.7 381.0 525.5" stroke="#3fae9f" stroke-width="0.85"/>
<path d="M209.0 415.4 C210.1 414.8 209.1 414.0 215.8 411.8 C222.5 409.6 237.3 404.6 249.0 402.4 C260.7 400.2 273.8 398.6 286.2 398.6 C298.6 398.6 311.8 400.2 323.4 402.4 C334.9 404.6 348.9 409.6 355.5 411.8 C362.1 414.0 361.8 414.8 363.0 415.4" stroke="#c6e9e4" stroke-width="2.2" opacity="0.6"/>
<path d="M209.0 415.4 C210.1 414.8 209.1 414.0 215.8 411.8 C222.5 409.6 237.3 404.6 249.0 402.4 C260.7 400.2 273.8 398.6 286.2 398.6 C298.6 398.6 311.8 400.2 323.4 402.4 C334.9 404.6 348.9 409.6 355.5 411.8 C362.1 414.0 361.8 414.8 363.0 415.4" stroke="#3fae9f" stroke-width="0.85"/>
<path d="M211.0 560.8 C212.3 561.4 212.3 562.4 218.6 564.6 C224.9 566.8 237.7 572.0 249.0 574.2 C260.3 576.5 273.8 578.1 286.2 578.1 C298.6 578.1 312.1 576.5 323.4 574.2 C334.6 572.0 347.4 566.8 353.7 564.6 C360.0 562.4 359.8 561.4 361.0 560.8" stroke="#c6e9e4" stroke-width="2.2" opacity="0.6"/>
<path d="M211.0 560.8 C212.3 561.4 212.3 562.4 218.6 564.6 C224.9 566.8 237.7 572.0 249.0 574.2 C260.3 576.5 273.8 578.1 286.2 578.1 C298.6 578.1 312.1 576.5 323.4 574.2 C334.6 572.0 347.4 566.8 353.7 564.6 C360.0 562.4 359.8 561.4 361.0 560.8" stroke="#3fae9f" stroke-width="0.85"/>
<path d="M257.5 385.5 C257.1 386.2 256.3 387.3 254.9 389.7 C253.5 392.1 251.1 396.0 248.9 400.0 C246.7 404.0 244.2 407.7 241.8 413.5 C239.4 419.3 236.4 427.2 234.6 434.9 C232.8 442.6 231.9 450.9 231.1 459.7 C230.3 468.5 230.0 478.0 230.0 487.5 C230.0 497.0 230.3 507.6 231.1 516.6 C231.9 525.6 232.8 533.8 234.6 541.5 C236.4 549.2 239.4 557.2 241.8 562.8 C244.2 568.4 246.5 571.8 248.9 575.3 C251.3 578.8 254.3 581.7 256.0 584.1 C257.7 586.5 258.5 588.6 259.0 589.5" stroke="#bfe6e0" stroke-width="3.6" opacity="0.8"/>
<path d="M257.5 385.5 C257.1 386.2 256.3 387.3 254.9 389.7 C253.5 392.1 251.1 396.0 248.9 400.0 C246.7 404.0 244.2 407.7 241.8 413.5 C239.4 419.3 236.4 427.2 234.6 434.9 C232.8 442.6 231.9 450.9 231.1 459.7 C230.3 468.5 230.0 478.0 230.0 487.5 C230.0 497.0 230.3 507.6 231.1 516.6 C231.9 525.6 232.8 533.8 234.6 541.5 C236.4 549.2 239.4 557.2 241.8 562.8 C244.2 568.4 246.5 571.8 248.9 575.3 C251.3 578.8 254.3 581.7 256.0 584.1 C257.7 586.5 258.5 588.6 259.0 589.5" stroke="#35a294" stroke-width="1.35"/>
<path d="M315.5 385.5 C315.9 386.2 316.7 387.3 318.2 389.7 C319.7 392.1 322.5 396.0 324.6 400.0 C326.7 404.0 328.8 407.7 331.0 413.5 C333.2 419.3 336.1 427.2 337.7 434.9 C339.3 442.6 340.0 450.9 340.6 459.7 C341.2 468.5 341.6 478.0 341.6 487.5 C341.6 497.0 341.2 507.6 340.6 516.6 C340.0 525.6 339.3 533.8 337.7 541.5 C336.1 549.2 333.2 557.2 331.0 562.8 C328.8 568.4 326.9 571.8 324.6 575.3 C322.4 578.8 319.2 581.7 317.5 584.1 C315.8 586.5 315.0 588.6 314.5 589.5" stroke="#bfe6e0" stroke-width="3.6" opacity="0.8"/>
<path d="M315.5 385.5 C315.9 386.2 316.7 387.3 318.2 389.7 C319.7 392.1 322.5 396.0 324.6 400.0 C326.7 404.0 328.8 407.7 331.0 413.5 C333.2 419.3 336.1 427.2 337.7 434.9 C339.3 442.6 340.0 450.9 340.6 459.7 C341.2 468.5 341.6 478.0 341.6 487.5 C341.6 497.0 341.2 507.6 340.6 516.6 C340.0 525.6 339.3 533.8 337.7 541.5 C336.1 549.2 333.2 557.2 331.0 562.8 C328.8 568.4 326.9 571.8 324.6 575.3 C322.4 578.8 319.2 581.7 317.5 584.1 C315.8 586.5 315.0 588.6 314.5 589.5" stroke="#35a294" stroke-width="1.35"/>
<circle cx="286.2" cy="487.7" r="100.8" fill="url(#gFade)" stroke="none"/>
</g>
<rect x="231.5" y="383.5" width="10.6" height="10.6" fill="#0000ff" transform="rotate(-22 236.8 388.8)"/>
<rect x="331.1" y="383.5" width="10.6" height="10.6" fill="#0000ff" transform="rotate(24 336.4 388.8)"/>
<rect x="231.7" y="581.7" width="10.6" height="10.6" fill="#0000ff" transform="rotate(24 237 587)"/>
<rect x="331.1" y="582.1" width="10.6" height="10.6" fill="#0000ff" transform="rotate(-24 336.4 587.4)"/>
<rect x="393" y="483" width="9" height="11.6" rx="1.5" fill="#0000ff"/>
<circle cx="185" cy="488.4" r="5.6" fill="#0000ff"/><circle cx="194.6" cy="488.2" r="8.3" fill="#0000ff"/>
<rect x="331.3" y="478.6" width="20.6" height="19.3" rx="8.6" fill="#0000ff"/>
<text x="180.6" y="491.6" font-family="Liberation Serif,serif" font-size="9.6" fill="#fff">10 9</text>
<text x="338.2" y="491.8" text-anchor="middle" font-family="Liberation Serif,serif" font-size="9.6" fill="#fff">8</text>
<text x="238.2" y="393.6" text-anchor="middle" font-family="Liberation Serif,serif" font-size="8.6" fill="#fff" opacity="0.85">3</text>
<text x="335.4" y="393.8" text-anchor="middle" font-family="Liberation Serif,serif" font-size="8.6" fill="#fff" opacity="0.85">2</text>
<text x="396" y="491" text-anchor="middle" font-family="Liberation Serif,serif" font-size="8.6" fill="#fff" opacity="0.6">7</text>
<text x="238.6" y="586.4" text-anchor="middle" font-family="Liberation Serif,serif" font-size="8.8" fill="#fff">17</text>
<text x="334.8" y="586.8" text-anchor="middle" font-family="Liberation Serif,serif" font-size="8.8" fill="#fff">16</text>
<rect x="268.1" y="385.3" width="3.0" height="3.0" fill="#d8b400" transform="rotate(30 269.6 386.8)"/>
<rect x="263.6" y="435.6" width="2.8" height="2.8" fill="#ff8400" transform="rotate(30 265 437)"/>
<rect x="256.5" y="457.1" width="3.0" height="3.0" fill="#dcc000" transform="rotate(30 258 458.6)"/>
<rect x="334.1" y="423.1" width="3.0" height="3.0" fill="#e83800" transform="rotate(30 335.6 424.6)"/>
<rect x="361.9" y="411.1" width="1.8" height="1.8" fill="#ff9030" transform="rotate(30 362.8 412)"/>
<rect x="385.1" y="452.3" width="2.2" height="2.2" fill="#d8c020" transform="rotate(30 386.2 453.4)"/>
<rect x="385.4" y="467.6" width="2.4" height="2.4" fill="#70c010" transform="rotate(30 386.6 468.8)"/>
</svg>
<div class="t" style="top:383.51px;font-size:10.7px;line-height:14.98px;color:#000;left:9.60px;font-family:'Liberation Serif','Noto Serif CJK SC',serif;">球面定位图</div>
<div class="t" style="top:397.37px;font-size:9.05px;line-height:12.67px;color:#000;left:9.40px;font-family:'Liberation Mono',monospace;">X:0.0 mm, Y:0.0 mm, Z:0.0 mm</div>
<div class="t" style="top:409.56px;font-size:9.05px;line-height:12.67px;color:#000;left:9.40px;font-family:'Liberation Mono',monospace;">Events Count: 32</div>
<div class="b" style="left:573.4px;top:377.6px;width:590.8px;height:220.2px;background:#000;"></div>
<svg width="1167" height="619" viewBox="0 0 1167 619">
<rect x="612.0" y="397.8" width="540.6" height="39.6" fill="#000" stroke="#c4c4c4" stroke-width="1.5"/>
<path d="M614 402.6H1150.4" stroke="#1e3218" stroke-width="0.8"/>
<path d="M614 407.8H1150.4" stroke="#1e3218" stroke-width="0.8"/>
<path d="M614 413.0H1150.4" stroke="#1e3218" stroke-width="0.8"/>
<path d="M614 418.2H1150.4" stroke="#1e3218" stroke-width="0.8"/>
<path d="M614 423.4H1150.4" stroke="#1e3218" stroke-width="0.8"/>
<path d="M614 428.6H1150.4" stroke="#1e3218" stroke-width="0.8"/>
<path d="M614 433.8H1150.4" stroke="#1e3218" stroke-width="0.8"/>
<path d="M639.6 399.4V435.6" stroke="#1c3017" stroke-width="0.8"/>
<path d="M666.6 399.4V435.6" stroke="#31502a" stroke-width="0.8"/>
<path d="M693.6 399.4V435.6" stroke="#1c3017" stroke-width="0.8"/>
<path d="M720.6 399.4V435.6" stroke="#31502a" stroke-width="0.8"/>
<path d="M747.6 399.4V435.6" stroke="#1c3017" stroke-width="0.8"/>
<path d="M774.6 399.4V435.6" stroke="#31502a" stroke-width="0.8"/>
<path d="M801.6 399.4V435.6" stroke="#1c3017" stroke-width="0.8"/>
<path d="M828.6 399.4V435.6" stroke="#31502a" stroke-width="0.8"/>
<path d="M855.6 399.4V435.6" stroke="#1c3017" stroke-width="0.8"/>
<path d="M882.6 399.4V435.6" stroke="#31502a" stroke-width="0.8"/>
<path d="M909.6 399.4V435.6" stroke="#1c3017" stroke-width="0.8"/>
<path d="M936.6 399.4V435.6" stroke="#31502a" stroke-width="0.8"/>
<path d="M963.6 399.4V435.6" stroke="#1c3017" stroke-width="0.8"/>
<path d="M990.6 399.4V435.6" stroke="#31502a" stroke-width="0.8"/>
<path d="M1017.6 399.4V435.6" stroke="#1c3017" stroke-width="0.8"/>
<path d="M1044.6 399.4V435.6" stroke="#31502a" stroke-width="0.8"/>
<path d="M1071.6 399.4V435.6" stroke="#1c3017" stroke-width="0.8"/>
<path d="M1098.6 399.4V435.6" stroke="#31502a" stroke-width="0.8"/>
<path d="M1125.6 399.4V435.6" stroke="#1c3017" stroke-width="0.8"/>
<text x="608.8" y="405.5" text-anchor="end" font-family="Liberation Sans,sans-serif" font-size="8.1" font-weight="bold" fill="#fa7efa">3.13</text>
<text x="608.8" y="410.8" text-anchor="end" font-family="Liberation Sans,sans-serif" font-size="8.1" font-weight="bold" fill="#fa7efa">1.56</text>
<text x="608.8" y="420.5" text-anchor="end" font-family="Liberation Sans,sans-serif" font-size="8.1" font-weight="bold" fill="#fa7efa">0.00</text>
<text x="608.8" y="430.6" text-anchor="end" font-family="Liberation Sans,sans-serif" font-size="8.1" font-weight="bold" fill="#fa7efa">-1.56</text>
<rect x="612.0" y="441.0" width="540.6" height="39.6" fill="#000" stroke="#c4c4c4" stroke-width="1.5"/>
<path d="M614 445.8H1150.4" stroke="#1e3218" stroke-width="0.8"/>
<path d="M614 451.0H1150.4" stroke="#1e3218" stroke-width="0.8"/>
<path d="M614 456.2H1150.4" stroke="#1e3218" stroke-width="0.8"/>
<path d="M614 461.4H1150.4" stroke="#1e3218" stroke-width="0.8"/>
<path d="M614 466.6H1150.4" stroke="#1e3218" stroke-width="0.8"/>
<path d="M614 471.8H1150.4" stroke="#1e3218" stroke-width="0.8"/>
<path d="M614 477.0H1150.4" stroke="#1e3218" stroke-width="0.8"/>
<path d="M639.6 442.6V478.8" stroke="#1c3017" stroke-width="0.8"/>
<path d="M666.6 442.6V478.8" stroke="#31502a" stroke-width="0.8"/>
<path d="M693.6 442.6V478.8" stroke="#1c3017" stroke-width="0.8"/>
<path d="M720.6 442.6V478.8" stroke="#31502a" stroke-width="0.8"/>
<path d="M747.6 442.6V478.8" stroke="#1c3017" stroke-width="0.8"/>
<path d="M774.6 442.6V478.8" stroke="#31502a" stroke-width="0.8"/>
<path d="M801.6 442.6V478.8" stroke="#1c3017" stroke-width="0.8"/>
<path d="M828.6 442.6V478.8" stroke="#31502a" stroke-width="0.8"/>
<path d="M855.6 442.6V478.8" stroke="#1c3017" stroke-width="0.8"/>
<path d="M882.6 442.6V478.8" stroke="#31502a" stroke-width="0.8"/>
<path d="M909.6 442.6V478.8" stroke="#1c3017" stroke-width="0.8"/>
<path d="M936.6 442.6V478.8" stroke="#31502a" stroke-width="0.8"/>
<path d="M963.6 442.6V478.8" stroke="#1c3017" stroke-width="0.8"/>
<path d="M990.6 442.6V478.8" stroke="#31502a" stroke-width="0.8"/>
<path d="M1017.6 442.6V478.8" stroke="#1c3017" stroke-width="0.8"/>
<path d="M1044.6 442.6V478.8" stroke="#31502a" stroke-width="0.8"/>
<path d="M1071.6 442.6V478.8" stroke="#1c3017" stroke-width="0.8"/>
<path d="M1098.6 442.6V478.8" stroke="#31502a" stroke-width="0.8"/>
<path d="M1125.6 442.6V478.8" stroke="#1c3017" stroke-width="0.8"/>
<text x="608.8" y="448.7" text-anchor="end" font-family="Liberation Sans,sans-serif" font-size="8.1" font-weight="bold" fill="#fa7efa">3.13</text>
<text x="608.8" y="454.0" text-anchor="end" font-family="Liberation Sans,sans-serif" font-size="8.1" font-weight="bold" fill="#fa7efa">1.56</text>
<text x="608.8" y="463.7" text-anchor="end" font-family="Liberation Sans,sans-serif" font-size="8.1" font-weight="bold" fill="#fa7efa">0.00</text>
<text x="608.8" y="473.8" text-anchor="end" font-family="Liberation Sans,sans-serif" font-size="8.1" font-weight="bold" fill="#fa7efa">-1.56</text>
<rect x="612.0" y="484.2" width="540.6" height="39.6" fill="#000" stroke="#c4c4c4" stroke-width="1.5"/>
<path d="M614 489.0H1150.4" stroke="#1e3218" stroke-width="0.8"/>
<path d="M614 494.2H1150.4" stroke="#1e3218" stroke-width="0.8"/>
<path d="M614 499.4H1150.4" stroke="#1e3218" stroke-width="0.8"/>
<path d="M614 504.6H1150.4" stroke="#1e3218" stroke-width="0.8"/>
<path d="M614 509.8H1150.4" stroke="#1e3218" stroke-width="0.8"/>
<path d="M614 515.0H1150.4" stroke="#1e3218" stroke-width="0.8"/>
<path d="M614 520.2H1150.4" stroke="#1e3218" stroke-width="0.8"/>
<path d="M639.6 485.8V522.0" stroke="#1c3017" stroke-width="0.8"/>
<path d="M666.6 485.8V522.0" stroke="#31502a" stroke-width="0.8"/>
<path d="M693.6 485.8V522.0" stroke="#1c3017" stroke-width="0.8"/>
<path d="M720.6 485.8V522.0" stroke="#31502a" stroke-width="0.8"/>
<path d="M747.6 485.8V522.0" stroke="#1c3017" stroke-width="0.8"/>
<path d="M774.6 485.8V522.0" stroke="#31502a" stroke-width="0.8"/>
<path d="M801.6 485.8V522.0" stroke="#1c3017" stroke-width="0.8"/>
<path d="M828.6 485.8V522.0" stroke="#31502a" stroke-width="0.8"/>
<path d="M855.6 485.8V522.0" stroke="#1c3017" stroke-width="0.8"/>
<path d="M882.6 485.8V522.0" stroke="#31502a" stroke-width="0.8"/>
<path d="M909.6 485.8V522.0" stroke="#1c3017" stroke-width="0.8"/>
<path d="M936.6 485.8V522.0" stroke="#31502a" stroke-width="0.8"/>
<path d="M963.6 485.8V522.0" stroke="#1c3017" stroke-width="0.8"/>
<path d="M990.6 485.8V522.0" stroke="#31502a" stroke-width="0.8"/>
<path d="M1017.6 485.8V522.0" stroke="#1c3017" stroke-width="0.8"/>
<path d="M1044.6 485.8V522.0" stroke="#31502a" stroke-width="0.8"/>
<path d="M1071.6 485.8V522.0" stroke="#1c3017" stroke-width="0.8"/>
<path d="M1098.6 485.8V522.0" stroke="#31502a" stroke-width="0.8"/>
<path d="M1125.6 485.8V522.0" stroke="#1c3017" stroke-width="0.8"/>
<text x="608.8" y="491.9" text-anchor="end" font-family="Liberation Sans,sans-serif" font-size="8.1" font-weight="bold" fill="#fa7efa">3.13</text>
<text x="608.8" y="497.2" text-anchor="end" font-family="Liberation Sans,sans-serif" font-size="8.1" font-weight="bold" fill="#fa7efa">1.56</text>
<text x="608.8" y="506.9" text-anchor="end" font-family="Liberation Sans,sans-serif" font-size="8.1" font-weight="bold" fill="#fa7efa">0.00</text>
<text x="608.8" y="517.0" text-anchor="end" font-family="Liberation Sans,sans-serif" font-size="8.1" font-weight="bold" fill="#fa7efa">-1.56</text>
<rect x="612.0" y="527.4" width="540.6" height="39.6" fill="#000" stroke="#c4c4c4" stroke-width="1.5"/>
<path d="M614 532.2H1150.4" stroke="#1e3218" stroke-width="0.8"/>
<path d="M614 537.4H1150.4" stroke="#1e3218" stroke-width="0.8"/>
<path d="M614 542.6H1150.4" stroke="#1e3218" stroke-width="0.8"/>
<path d="M614 547.8H1150.4" stroke="#1e3218" stroke-width="0.8"/>
<path d="M614 553.0H1150.4" stroke="#1e3218" stroke-width="0.8"/>
<path d="M614 558.2H1150.4" stroke="#1e3218" stroke-width="0.8"/>
<path d="M614 563.4H1150.4" stroke="#1e3218" stroke-width="0.8"/>
<path d="M639.6 529.0V565.2" stroke="#1c3017" stroke-width="0.8"/>
<path d="M666.6 529.0V565.2" stroke="#31502a" stroke-width="0.8"/>
<path d="M693.6 529.0V565.2" stroke="#1c3017" stroke-width="0.8"/>
<path d="M720.6 529.0V565.2" stroke="#31502a" stroke-width="0.8"/>
<path d="M747.6 529.0V565.2" stroke="#1c3017" stroke-width="0.8"/>
<path d="M774.6 529.0V565.2" stroke="#31502a" stroke-width="0.8"/>
<path d="M801.6 529.0V565.2" stroke="#1c3017" stroke-width="0.8"/>
<path d="M828.6 529.0V565.2" stroke="#31502a" stroke-width="0.8"/>
<path d="M855.6 529.0V565.2" stroke="#1c3017" stroke-width="0.8"/>
<path d="M882.6 529.0V565.2" stroke="#31502a" stroke-width="0.8"/>
<path d="M909.6 529.0V565.2" stroke="#1c3017" stroke-width="0.8"/>
<path d="M936.6 529.0V565.2" stroke="#31502a" stroke-width="0.8"/>
<path d="M963.6 529.0V565.2" stroke="#1c3017" stroke-width="0.8"/>
<path d="M990.6 529.0V565.2" stroke="#31502a" stroke-width="0.8"/>
<path d="M1017.6 529.0V565.2" stroke="#1c3017" stroke-width="0.8"/>
<path d="M1044.6 529.0V565.2" stroke="#31502a" stroke-width="0.8"/>
<path d="M1071.6 529.0V565.2" stroke="#1c3017" stroke-width="0.8"/>
<path d="M1098.6 529.0V565.2" stroke="#31502a" stroke-width="0.8"/>
<path d="M1125.6 529.0V565.2" stroke="#1c3017" stroke-width="0.8"/>
<text x="608.8" y="535.1" text-anchor="end" font-family="Liberation Sans,sans-serif" font-size="8.1" font-weight="bold" fill="#fa7efa">3.13</text>
<text x="608.8" y="540.4" text-anchor="end" font-family="Liberation Sans,sans-serif" font-size="8.1" font-weight="bold" fill="#fa7efa">1.56</text>
<text x="608.8" y="550.1" text-anchor="end" font-family="Liberation Sans,sans-serif" font-size="8.1" font-weight="bold" fill="#fa7efa">0.00</text>
<text x="608.8" y="560.2" text-anchor="end" font-family="Liberation Sans,sans-serif" font-size="8.1" font-weight="bold" fill="#fa7efa">-1.56</text>
<polyline points="613.3,418.3 622.5,418.5 625.7,418.8 626.5,410.7 627.3,420.4 628.1,430.1 628.9,422.0 629.8,411.5 632.2,412.3 633.8,411.5 634.6,422.0 635.4,428.5 636.7,426.9 637.8,423.6 638.6,415.6 639.5,405.9 640.3,410.7 641.1,413.9 642.7,417.2 643.5,422.0 644.6,426.1 645.9,420.4 646.7,418.0 649.2,413.9 650.3,418.8 651.6,418.8 652.9,414.7 654.0,420.4 655.6,420.4 657.2,423.6 658.8,419.6 660.5,416.4 661.8,418.8 662.9,418.0 664.5,415.6 666.1,413.9 667.7,417.2 669.4,418.0 671.0,415.6 672.6,414.7 675.0,418.8 677.4,421.2 679.1,421.7 680.7,422.3 682.6,419.6 684.7,418.0 685.8,420.4 687.1,421.7 689.1,417.2 691.2,413.1 692.8,414.3 694.4,414.7 696.0,418.0 697.6,418.8 698.8,416.4 700.1,414.7 702.5,418.0 704.9,420.1 708.1,419.1 711.4,418.8 715.4,418.8 719.5,418.8 722.7,417.5 725.1,418.1 727.5,418.5 731.6,417.2 734.0,418.8 735.0,418.2 735.7,417.4 736.4,416.5 737.1,416.5 737.8,417.7 738.5,418.2 739.2,418.7 739.9,418.5 740.6,417.9 741.3,418.0 742.0,418.2 742.7,418.8 743.4,418.5 744.1,417.9 744.8,417.1 745.5,416.9 746.2,417.3 746.9,418.2 747.6,419.4 748.3,419.2 749.0,418.2 749.7,417.3 750.4,416.8 751.1,417.4 751.8,418.4 752.5,418.8 753.2,419.0 753.9,417.9 754.6,417.6 755.3,417.2 756.0,418.2 756.7,418.8 757.4,418.4 758.1,418.3 758.8,418.2 759.5,417.4 760.2,417.7 760.9,417.5 761.6,417.5 762.3,418.1 763.0,418.2 763.7,417.9 764.4,418.0 765.1,418.4 765.8,418.9 766.5,418.5 767.2,417.6 767.9,417.5 768.6,417.5 769.3,417.6 770.0,418.3 770.7,417.7 771.4,417.8 772.1,417.6 772.8,417.5 773.5,418.1 774.2,417.9 774.9,418.3 775.6,417.9 776.3,418.0 777.0,417.9 777.7,418.0 778.4,418.5 779.1,418.2 779.8,417.6 780.5,418.0 781.2,417.7 781.9,418.1 782.6,418.7 783.3,418.3 784.0,417.5 784.7,417.9 785.4,417.2 786.1,417.6 786.8,418.4 787.5,418.4 788.2,418.2 788.9,417.7 789.6,417.5 790.3,417.8 791.0,417.8 791.7,418.3 792.4,418.2 793.1,418.1 793.8,418.2 794.5,417.7 795.2,417.8 795.9,418.2 796.6,417.8 797.3,417.8 798.0,418.3 798.7,418.2 799.4,417.8 800.1,417.9 800.8,418.4 801.5,418.5 802.2,417.8 802.9,418.2 803.6,418.1 804.3,418.0 805.0,418.0 805.7,417.8 806.4,417.7 807.1,418.3 807.8,417.7 808.5,418.0 809.2,417.7 809.9,418.3 810.6,418.2 811.3,417.9 812.0,417.8 812.7,418.2 813.4,417.7 814.1,417.8 814.8,418.1 815.5,418.3 816.2,418.1 816.9,417.9 817.6,418.3 818.3,417.8 819.0,417.6 819.7,417.7 820.4,417.8 821.1,417.6 821.8,417.8 822.5,418.0 823.2,418.2 823.9,417.8 824.6,417.9 825.3,418.2 826.0,418.3 826.7,418.2 827.4,418.2 828.1,418.1 828.8,417.7 829.5,417.5 830.2,417.6 830.9,418.3 831.6,418.2 832.3,418.4 833.0,417.6 833.7,418.0 834.4,417.9 835.1,418.2 835.8,418.0 836.5,418.5 837.2,417.7 837.9,417.9 838.6,418.0 839.3,418.3 840.0,418.3 840.7,418.4 841.4,418.4 842.1,418.2 842.8,417.6 843.5,417.8 844.2,418.1 844.9,418.3 845.6,418.1 846.3,418.4 847.0,418.3 847.7,418.0 848.4,418.0 849.1,418.0 849.8,418.2 850.5,418.3 851.2,417.8 851.9,418.1 852.6,418.2 853.3,418.1 854.0,418.0 854.7,417.8 855.4,418.0 856.1,418.0 856.8,418.0 857.5,418.4 858.2,417.9 858.9,418.4 859.6,417.6 860.3,417.9 861.0,417.8 861.7,417.7 862.4,418.2 863.1,418.2 863.8,418.2 864.5,418.3 865.2,417.8 865.9,417.6 866.6,417.9 867.3,418.1 868.0,417.5 868.7,417.4 869.4,418.0 870.1,418.1 870.8,418.3 871.5,418.6 872.2,418.0 872.9,417.9 873.6,417.5 874.3,418.1 875.0,418.9 875.7,419.1 876.4,418.8 877.1,417.6 877.8,417.0 878.5,416.6 879.2,417.1 879.9,418.2 880.6,419.0 881.3,418.9 882.0,418.3 882.7,418.1 883.4,417.6 884.1,417.9 884.8,418.5 885.5,418.4 886.2,417.9 886.9,417.5 887.6,417.4 888.3,417.6 889.0,417.9 889.7,418.5 890.4,418.5 891.1,417.8 891.8,417.4 892.5,417.6 893.2,418.6 893.9,418.2 894.6,418.4 895.3,417.7 896.0,417.1 896.7,417.6 897.4,417.6 898.1,418.5 898.8,419.1 899.5,418.5 900.2,418.6 900.9,417.5 901.6,417.1 902.3,417.0 903.0,417.5 903.7,417.4 904.4,417.7 905.1,418.0 905.8,418.4 906.5,418.7 907.2,418.4 907.9,418.0 908.6,418.2 909.3,418.3 910.0,418.6 910.7,419.0 911.4,418.5 912.1,417.0 912.8,416.1 913.5,416.1 914.2,417.2 914.9,418.3 915.6,419.3 916.3,419.3 917.0,418.3 917.7,417.9 918.4,417.9 919.1,417.7 919.8,418.9 920.5,418.7 921.2,417.6 921.9,417.2 922.6,417.3 923.3,418.2 924.0,418.7 924.7,419.1 925.4,418.9 926.1,417.9 926.8,417.4 927.5,417.3 928.2,418.2 928.9,418.4 929.6,418.5 930.3,417.6 931.0,416.7 931.7,416.9 932.4,417.9 933.1,420.0 933.8,420.8 934.5,420.3 935.2,418.5 935.9,417.2 936.6,416.2 937.3,416.9 938.0,417.6 938.7,417.7 939.4,417.5 940.1,417.6 940.8,417.8 941.5,418.3 942.2,418.6 942.9,418.6 943.6,419.1 944.3,418.3 945.0,418.6 945.7,417.8 946.4,417.7 947.1,417.6 947.8,416.7 948.5,416.6 949.2,417.3 949.9,418.4 950.6,419.2 951.3,419.3 952.0,419.0 952.7,418.0 953.4,417.8 954.1,417.1 954.8,417.4 955.5,417.8 956.2,417.6 956.9,417.9 957.6,418.1 958.3,418.6 959.0,419.4 959.7,419.2 960.4,418.4 961.1,417.4 961.8,417.2 962.5,417.3 963.2,417.5 963.9,418.5 964.6,418.4 965.3,417.4 966.0,416.9 966.7,416.9 967.4,418.4 968.1,419.9 968.8,420.6 969.5,419.4 970.2,418.5 970.9,416.7 971.6,416.1 972.3,416.9 973.0,417.7 973.7,418.2 974.4,418.3 975.1,417.5 975.8,417.7 976.5,418.0 977.2,419.0 977.9,419.3 978.6,418.6 979.3,418.1 980.0,417.2 980.7,417.3 981.4,417.9 982.1,418.3 982.8,418.1 983.5,417.8 984.2,417.5 984.9,418.0 985.6,418.7 986.3,418.5 987.0,418.9 987.7,417.8 988.4,417.2 989.1,416.8 989.8,417.2 990.5,417.4 991.2,418.0 991.9,418.6 992.6,418.4 993.3,418.9 994.0,418.4 994.7,418.5 995.4,417.9 996.1,417.5 996.8,417.4 997.5,417.3 998.2,417.5 998.9,417.7 999.6,417.9 1000.3,417.5 1001.0,417.4 1001.7,418.0 1002.4,418.5 1003.1,419.0 1003.8,419.4 1004.5,418.8 1005.2,418.2 1005.9,417.0 1006.6,417.2 1007.3,417.6 1008.0,418.2 1008.7,418.1 1009.4,418.1 1010.1,418.4 1010.8,417.7 1011.5,418.4 1012.2,418.6 1012.9,418.1 1013.6,418.0 1014.3,417.9 1015.0,417.3 1015.7,417.3 1016.4,418.2 1017.1,418.2 1017.8,418.6 1018.5,417.9 1019.2,417.9 1019.9,418.0 1020.6,417.7 1021.3,418.0 1022.0,418.4 1022.7,418.4 1023.4,418.0 1024.1,417.1 1024.8,417.4 1025.5,418.0 1026.2,418.2 1026.9,418.6 1027.6,418.3 1028.3,418.0 1029.0,417.8 1029.7,417.7 1030.4,418.0 1031.1,417.9 1031.8,417.9 1032.5,417.5 1033.2,417.6 1033.9,417.6 1034.6,418.2 1035.3,418.4 1036.0,418.4 1036.7,417.8 1037.4,417.8 1038.1,418.5 1038.8,418.2 1039.5,418.3 1040.2,417.8 1040.9,417.8 1041.6,417.8 1042.3,417.8 1043.0,418.1 1043.7,417.7 1044.4,418.3 1045.1,418.3 1045.8,417.8 1046.5,418.0 1047.2,418.2 1047.9,417.9 1048.6,417.7 1049.3,417.6 1050.0,417.9 1050.7,417.5 1051.4,418.3 1052.1,418.4 1052.8,418.3 1053.5,418.4 1054.2,418.1 1054.9,417.9 1055.6,418.1 1056.3,418.1 1057.0,418.4 1057.7,418.2 1058.4,417.7 1059.1,418.0 1059.8,417.9 1060.5,418.1 1061.2,418.4 1061.9,418.2 1062.6,418.6 1063.3,418.4 1064.0,418.1 1064.7,418.1 1065.4,418.1 1066.1,417.9 1066.8,418.1 1067.5,417.6 1068.2,417.7 1068.9,417.9 1069.6,417.6 1070.3,418.0 1071.0,418.3 1071.7,418.2 1072.4,417.8 1073.1,418.3 1073.8,418.1 1074.5,417.9 1075.2,418.1 1075.9,418.0 1076.6,417.9 1077.3,417.8 1078.0,418.3 1078.7,418.2 1079.4,418.4 1080.1,418.5 1080.8,418.5 1081.5,417.6 1082.2,417.9 1082.9,417.9 1083.6,417.5 1084.3,417.6 1085.0,417.5 1085.7,417.7 1086.4,418.1 1087.1,418.1 1087.8,418.2 1088.5,418.6 1089.2,418.1 1089.9,417.9 1090.6,418.3 1091.3,418.1 1092.0,418.4 1092.7,417.9 1093.4,417.8 1094.1,417.0 1094.8,417.5 1095.5,418.1 1096.2,418.2 1096.9,419.2 1097.6,418.5 1098.3,418.3 1099.0,417.5 1099.7,417.6 1100.4,417.8 1101.1,417.6 1101.8,418.3 1102.5,417.8 1103.2,417.7 1103.9,417.8 1104.6,418.0 1105.3,418.4 1106.0,418.8 1106.7,418.4 1107.4,417.6 1108.1,417.6 1108.8,417.3 1109.5,417.5 1110.2,418.0 1110.9,417.9 1111.6,417.7 1112.3,417.9 1113.0,417.7 1113.7,418.7 1114.4,419.2 1115.1,418.8 1115.8,419.0 1116.5,418.0 1117.2,416.6 1117.9,416.9 1118.6,416.8 1119.3,417.5 1120.0,418.4 1120.7,418.3 1121.4,418.7 1122.1,419.1 1122.8,418.9 1123.5,418.6 1124.2,418.7 1124.9,418.2 1125.6,417.8 1126.3,417.3 1127.0,417.7 1127.7,417.5 1128.4,417.1 1129.1,416.9 1129.8,417.5 1130.5,417.8 1131.2,418.9 1131.9,419.5 1132.6,419.1 1133.3,418.1 1134.0,417.5 1134.7,417.0 1135.4,417.4 1136.1,417.7 1136.8,418.4 1137.5,418.4 1138.2,418.2 1138.9,418.0 1139.6,418.4 1140.3,419.3 1141.0,419.1 1141.7,418.1 1142.4,416.8 1143.1,416.2 1143.8,416.8 1144.5,417.8 1145.2,418.7 1145.9,419.0 1146.6,418.5 1147.3,417.5 1148.0,417.6 1148.7,419.0 1149.4,420.0 1150.1,420.2 1150.8,418.5" fill="none" stroke="#ff1010" stroke-width="0.95" stroke-linejoin="round"/>
<polyline points="613.4,461.4 615.8,461.0 618.2,462.2 620.2,460.0 622.1,462.0 624.5,461.0 625.5,453.9 626.5,463.1 627.6,472.3 628.9,459.3 629.9,448.1 630.5,455.4 631.5,451.5 632.5,456.8 633.3,453.4 633.7,491.7 634.7,478.6 635.4,462.2 636.4,459.7 637.1,464.1 638.1,453.4 638.6,441.3 639.6,451.5 640.5,483.5 641.2,465.1 641.8,453.4 642.5,449.6 642.9,465.1 643.6,479.6 644.4,472.8 645.1,441.3 645.7,453.4 646.6,470.9 647.3,460.2 648.3,448.6 649.0,460.2 649.7,472.8 650.5,463.1 651.5,451.5 652.2,453.4 653.1,478.2 653.8,465.1 654.6,455.4 655.5,462.2 656.3,471.9 657.0,460.2 657.7,448.6 658.4,455.4 659.4,466.0 660.2,451.5 661.4,459.3 662.3,468.9 663.1,459.3 664.3,452.5 665.2,467.0 666.2,461.2 667.2,458.3 668.1,465.1 669.1,460.2 670.1,454.9 671.2,465.1 672.5,461.2 673.5,463.1 674.4,468.0 675.4,462.2 676.9,464.1 677.8,460.2 679.0,458.8 680.3,466.0 681.2,462.2 682.2,458.8 683.6,461.2 684.6,458.3 685.6,456.3 686.7,461.7 688.0,458.3 689.0,460.7 689.9,463.6 691.2,457.8 692.4,457.3 693.5,459.7 694.8,458.8 696.2,464.1 697.7,459.3 699.6,462.2 702.1,461.7 704.5,462.2 706.9,461.4 709.8,461.7 710.5,460.9 711.4,461.9 712.3,462.4 713.2,461.7 714.1,460.7 715.0,460.6 715.9,461.3 716.8,462.0 717.7,461.8 718.6,461.3 719.5,461.2 720.4,461.5 721.3,461.5 722.2,460.9 723.1,460.8 724.0,461.7 724.9,462.5 725.8,462.0 726.7,460.5 727.6,459.8 728.5,461.1 729.4,462.8 730.3,462.9 731.2,461.3 732.1,459.9 733.0,460.3 733.9,461.8 734.8,462.6 735.7,462.0 736.6,461.0 737.5,460.8 738.4,461.1 739.3,461.4 740.2,461.5 741.1,461.8 742.0,461.9 742.9,461.5 743.8,460.7 744.7,460.6 745.6,461.5 746.5,462.3 747.4,462.0 748.3,461.0 749.2,460.6 750.1,461.3 751.0,461.9 751.9,461.7 752.8,461.1 753.7,461.2 754.6,461.8 755.5,461.8 756.4,461.0 757.3,460.5 758.2,461.4 759.1,462.5 760.0,462.2 760.9,460.8 761.8,460.0 762.7,461.1 763.6,462.6 764.5,462.5 765.4,460.9 766.3,460.0 767.2,461.0 768.1,462.5 769.0,462.5 769.9,461.0 770.8,460.1 771.7,461.0 772.6,462.3 773.5,462.4 774.4,461.2 775.3,460.4 776.2,461.0 777.1,462.0 778.0,462.1 778.9,461.4 779.8,460.8 780.7,461.1 781.6,461.7 782.5,461.7 783.4,461.3 784.3,461.1 785.2,461.4 786.1,461.8 787.0,461.6 787.9,461.1 788.8,460.9 789.7,461.4 790.6,462.0 791.5,461.9 792.4,461.3 793.3,460.7 794.2,460.9 795.1,461.5 796.0,462.1 796.9,462.1 797.8,461.3 798.7,460.5 799.6,460.5 800.5,461.5 801.4,462.5 802.3,462.4 803.2,461.2 804.1,460.2 805.0,460.5 805.9,461.7 806.8,462.5 807.7,462.0 808.6,461.0 809.5,460.7 810.4,461.1 811.3,461.5 812.2,461.5 813.1,461.5 814.0,461.8 814.9,461.9 815.8,461.2 816.7,460.4 817.6,460.6 818.5,461.9 819.4,462.9 820.3,462.2 821.2,460.5 822.1,459.7 823.0,460.7 823.9,462.4 824.8,462.9 825.7,461.9 826.6,460.6 827.5,460.2 828.4,460.8 829.3,461.9 830.0,461.4 831.9,460.7 833.9,461.7 835.8,462.0 837.8,459.7 839.7,461.4 842.1,461.7 843.6,456.8 844.5,468.0 845.5,470.4 846.3,458.3 847.2,452.5 848.2,456.8 849.4,462.2 850.3,468.0 851.3,471.9 852.5,462.2 853.3,454.4 854.2,457.8 855.0,459.7 856.0,453.4 857.1,457.3 858.1,467.5 859.1,465.1 860.0,459.7 861.2,466.5 862.5,459.3 863.4,456.5 864.9,456.8 866.3,459.3 867.6,468.5 868.8,464.1 869.7,460.7 871.7,459.3 873.1,460.7 874.6,458.8 875.5,460.2 877.0,462.6 878.4,460.7 879.9,461.2 880.9,459.3 882.8,461.7 884.3,459.7 885.7,462.2 887.2,461.2 889.1,464.6 890.6,461.7 892.0,460.7 893.5,458.8 894.4,462.2 895.9,459.3 896.9,461.7 898.3,463.1 899.8,459.7 901.7,460.2 903.6,459.3 905.6,460.7 907.5,462.0 909.5,460.7 911.4,461.4 914.3,461.7 917.2,461.7 921.1,461.4 924.5,461.2 926.4,459.7 927.9,462.0 929.8,461.4 930.5,462.1 931.4,461.1 932.3,460.8 933.2,461.4 934.1,461.6 935.0,461.3 935.9,461.6 936.8,462.0 937.7,461.3 938.6,460.4 939.5,460.9 940.4,462.2 941.3,462.4 942.2,461.3 943.1,460.5 944.0,460.7 944.9,461.5 945.8,462.3 946.7,462.2 947.6,461.1 948.5,460.1 949.4,460.7 950.3,462.2 951.2,462.7 952.1,461.6 953.0,460.4 953.9,460.6 954.8,461.6 955.7,462.2 956.6,461.9 957.5,461.2 958.4,460.9 959.3,461.2 960.2,461.4 961.1,461.5 962.0,461.8 962.9,461.8 963.8,461.1 964.7,460.5 965.6,461.2 966.5,462.3 967.4,462.0 968.3,460.9 969.2,460.7 970.1,461.5 971.0,461.8 971.9,461.5 972.8,461.5 973.7,461.4 974.6,461.0 975.5,461.2 976.4,462.0 977.3,461.8 978.2,460.7 979.1,460.8 980.0,462.1 980.9,462.2 981.8,460.8 982.7,460.4 983.6,461.7 984.5,462.4 985.4,461.4 986.3,460.8 987.2,461.2 988.1,461.5 989.0,461.3 989.9,461.6 990.8,461.9 991.7,461.3 992.6,460.6 993.5,461.2 994.4,462.0 995.3,461.8 996.2,461.1 997.1,461.2 998.0,461.4 998.9,461.2 999.8,461.2 1000.7,461.9 1001.6,462.1 1002.5,460.9 1003.4,460.2 1004.3,461.3 1005.2,462.6 1006.1,462.1 1007.0,460.8 1007.9,460.6 1008.8,461.2 1009.7,461.7 1010.6,462.1 1011.5,462.0 1012.4,461.0 1013.3,460.3 1014.2,461.1 1015.1,462.4 1016.0,462.3 1016.9,461.1 1017.8,460.6 1018.7,461.2 1019.6,461.6 1020.5,461.6 1021.4,461.6 1022.3,461.7 1023.2,461.2 1024.1,460.8 1025.0,461.1 1025.9,461.9 1026.8,462.1 1027.7,461.4 1028.6,460.7 1029.5,460.8 1030.4,461.7 1031.3,462.2 1032.2,461.6 1033.1,460.8 1034.0,461.0 1034.9,461.7 1035.8,461.8 1036.7,461.4 1037.6,461.2 1038.5,461.3 1039.4,461.4 1040.3,461.7 1041.2,461.6 1042.1,461.0 1043.0,460.8 1043.9,461.6 1044.8,462.5 1045.7,461.6 1046.6,460.2 1047.5,460.8 1048.4,462.2 1049.3,462.2 1050.2,461.1 1051.1,460.9 1052.0,461.4 1052.9,461.4 1053.8,461.2 1054.7,461.8 1055.6,462.1 1056.5,461.1 1057.4,460.4 1058.3,461.2 1059.2,462.1 1060.1,461.8 1061.0,461.2 1061.9,461.3 1062.8,461.2 1063.7,460.9 1064.6,461.5 1065.5,462.4 1066.4,461.8 1067.3,460.4 1068.2,460.5 1069.1,461.9 1070.0,462.4 1070.9,461.5 1071.8,460.8 1072.7,461.0 1073.6,461.5 1074.5,461.5 1075.4,461.8 1076.3,461.8 1077.2,461.1 1078.1,460.6 1079.0,461.3 1079.9,462.2 1080.8,461.8 1081.7,461.0 1082.6,461.1 1083.5,461.5 1084.4,461.3 1085.3,461.2 1086.2,461.9 1087.1,462.0 1088.0,460.9 1088.9,460.5 1089.8,461.5 1090.7,462.3 1091.6,461.8 1092.5,460.8 1093.4,460.9 1094.3,461.5 1095.2,461.8 1096.1,461.6 1097.0,461.2 1097.9,461.1 1098.8,461.4 1099.7,461.8 1100.6,461.6 1101.5,461.0 1102.4,461.0 1103.3,461.6 1104.2,462.0 1105.1,461.6 1106.0,460.9 1106.9,460.7 1107.8,461.4 1108.7,462.2 1109.6,462.0 1110.5,460.9 1111.4,460.4 1112.3,461.3 1113.2,462.2 1114.1,461.8 1115.0,461.2 1115.9,461.3 1116.8,461.3 1117.7,460.9 1118.6,461.2 1119.5,462.2 1120.4,462.2 1121.3,460.8 1122.2,460.2 1123.1,461.3 1124.0,462.3 1124.9,462.0 1125.8,461.4 1126.7,461.0 1127.6,460.7 1128.5,460.9 1129.4,462.1 1130.3,462.7 1131.2,461.3 1132.1,459.9 1133.0,460.8 1133.9,462.4 1134.8,462.3 1135.7,461.0 1136.6,460.8 1137.5,461.4 1138.4,461.4 1139.3,461.3 1140.2,461.7 1141.1,461.8 1142.0,461.1 1142.9,460.8 1143.8,461.4 1144.7,462.0 1145.6,461.5 1146.5,461.1 1147.4,461.4 1148.3,461.4 1149.2,461.0 1150.1,461.4" fill="none" stroke="#10f010" stroke-width="0.95" stroke-linejoin="round"/>
<path d="M613.4 504.7H1150.8" stroke="#1c9bd2" stroke-width="1"/>
<path d="M613.6 547.5h2.3 M615.9 547.5h1.8 M617.7 547.5h4.7 M622.4 547.5h5.0 M627.3 548.4h5.4 M635.4 548.4h3.3 M638.6 547.5h4.7 M648.3 547.5h4.1 M656.6 547.5h2.1 M658.7 547.5h2.5 M665.4 548.4h2.1 M671.8 547.5h5.9 M677.8 547.5h2.0 M679.8 548.4h4.8 M684.6 547.5h3.0 M687.6 547.5h3.7 M691.2 548.4h5.1 M699.6 547.5h5.9 M705.5 548.4h4.0 M711.8 547.5h2.6 M714.4 547.5h3.0 M717.4 548.4h2.1 M719.5 547.5h2.5 M722.0 547.5h2.7 M724.7 547.5h5.5 M732.5 548.4h2.4 M734.9 548.4h3.4 M738.3 547.5h1.8 M744.4 548.4h5.4 M749.8 548.4h5.3 M755.0 547.5h1.6 M758.5 547.5h2.9 M761.4 548.4h2.4 M777.7 548.4h2.0 M784.3 547.5h1.6 M786.0 547.5h3.2 M789.2 547.5h5.1 M797.4 547.5h2.9 M805.2 548.4h4.0 M809.2 547.5h2.0 M811.2 547.5h3.4 M814.6 547.5h3.3 M823.7 548.4h2.9 M832.6 547.5h2.5 M835.1 547.5h2.3 M837.4 547.5h5.8 M843.1 548.4h3.1 M846.2 547.5h4.4 M853.1 548.4h5.4 M862.5 547.5h4.6 M867.1 547.5h3.4 M870.5 547.5h4.2 M874.7 548.4h1.6 M893.4 548.4h2.1 M895.5 548.4h2.6 M903.8 548.4h3.8 M907.6 548.4h5.4 M913.0 547.5h5.1 M918.1 547.5h5.4 M923.5 547.5h4.4 M927.9 547.5h5.0 M942.0 547.5h2.2 M945.9 547.5h5.3 M951.1 548.4h3.2 M962.4 547.5h4.8 M967.1 547.5h3.4 M970.6 548.4h2.9 M973.5 548.4h4.2 M977.7 548.4h2.1 M981.9 547.5h4.2 M992.1 547.5h3.1 M995.2 548.4h2.2 M997.4 547.5h5.2 M1002.6 548.4h3.8 M1006.3 547.5h4.7 M1011.0 548.4h2.8 M1013.8 548.4h5.3 M1024.8 547.5h4.2 M1029.0 547.5h3.4 M1032.4 547.5h5.8 M1038.2 547.5h4.5 M1042.7 548.4h2.1 M1048.2 547.5h5.3 M1053.6 548.4h1.9 M1063.2 547.5h5.8 M1068.9 547.5h3.6 M1072.5 548.4h2.9 M1081.3 548.4h3.3 M1084.6 548.4h4.7 M1089.3 547.5h3.6 M1092.8 548.4h2.5 M1095.3 547.5h3.2 M1098.5 547.5h4.8 M1110.4 547.5h5.0 M1117.0 547.5h5.5 M1122.5 547.5h3.9 M1126.4 547.5h5.1 M1131.4 547.5h2.1 M1133.5 547.5h1.9 M1135.4 547.5h5.0 M1140.4 547.5h1.7 M1146.2 548.4h2.0 M1148.1 547.5h5.9" stroke="#8c6812" stroke-width="0.9" fill="none"/>
<text x="617.8" y="407.0" font-family="Liberation Sans,sans-serif" font-size="8.1" fill="#8d8dff" textLength="137.4" lengthAdjust="spacing">CH:  1   T: 24:20:24:31:488 313400</text>
<text x="617.8" y="450.2" font-family="Liberation Sans,sans-serif" font-size="8.1" fill="#8d8dff" textLength="137.4" lengthAdjust="spacing">CH:  2   T: 24:20:24:10:400 624500</text>
<text x="617.8" y="493.4" font-family="Liberation Sans,sans-serif" font-size="8.1" fill="#8d8dff" textLength="137.4" lengthAdjust="spacing">CH:  3   T: 24:20:26:00:152 642600</text>
<text x="617.8" y="536.6" font-family="Liberation Sans,sans-serif" font-size="8.1" fill="#8d8dff" textLength="137.4" lengthAdjust="spacing">CH:  4   T: 24:20:26:00:151 325100</text>
<text x="611.6" y="575.5" text-anchor="middle" font-family="Liberation Sans,sans-serif" font-size="8.1" font-weight="bold" fill="#fa7efa">0.000</text>
<text x="665.6" y="575.5" text-anchor="middle" font-family="Liberation Sans,sans-serif" font-size="8.1" font-weight="bold" fill="#fa7efa">0.100</text>
<text x="719.6" y="575.5" text-anchor="middle" font-family="Liberation Sans,sans-serif" font-size="8.1" font-weight="bold" fill="#fa7efa">0.200</text>
<text x="773.6" y="575.5" text-anchor="middle" font-family="Liberation Sans,sans-serif" font-size="8.1" font-weight="bold" fill="#fa7efa">0.300</text>
<text x="827.6" y="575.5" text-anchor="middle" font-family="Liberation Sans,sans-serif" font-size="8.1" font-weight="bold" fill="#fa7efa">0.400</text>
<text x="881.6" y="575.5" text-anchor="middle" font-family="Liberation Sans,sans-serif" font-size="8.1" font-weight="bold" fill="#fa7efa">0.500</text>
<text x="935.6" y="575.5" text-anchor="middle" font-family="Liberation Sans,sans-serif" font-size="8.1" font-weight="bold" fill="#fa7efa">0.600</text>
<text x="989.6" y="575.5" text-anchor="middle" font-family="Liberation Sans,sans-serif" font-size="8.1" font-weight="bold" fill="#fa7efa">0.700</text>
<text x="1043.6" y="575.5" text-anchor="middle" font-family="Liberation Sans,sans-serif" font-size="8.1" font-weight="bold" fill="#fa7efa">0.800</text>
<text x="1097.6" y="575.5" text-anchor="middle" font-family="Liberation Sans,sans-serif" font-size="8.1" font-weight="bold" fill="#fa7efa">0.900</text>
<text x="1152.4" y="575.5" text-anchor="end" font-family="Liberation Sans,sans-serif" font-size="8.1" font-weight="bold" fill="#fa7efa">1.000</text>
<text x="1152.4" y="586.8" text-anchor="end" font-family="Liberation Sans,sans-serif" font-size="8.1" font-weight="bold" fill="#fa7efa">ms</text>
<text x="612.4" y="394.9" font-family="Liberation Sans,Noto Sans CJK SC,sans-serif" font-size="8.1" font-weight="bold" fill="#fa7efa">单位: ( x10e-1 ) V</text>
<text x="1152.2" y="394.9" text-anchor="end" font-family="Liberation Sans,Noto Sans CJK SC,sans-serif" font-size="8.1" font-weight="bold" fill="#fa7efa">第 27098 次</text>
</svg>
<div class="b" style="left:1px;top:600px;width:1165px;height:17.8px;background:linear-gradient(#d6e6fb 0,#b7d2f7 4px,#afcdf6 9px,#c3d9f7 17.8px);"></div>
<div class="t" style="top:604.60px;font-size:8.5px;line-height:11.9px;color:#2b3648;left:5.20px;">采集卡/通道总数: 0 / 0</div>
<div class="t" style="top:604.60px;font-size:8.5px;line-height:11.9px;color:#2b3648;left:101.20px;">回放:</div>
<div class="t" style="top:604.60px;font-size:8.5px;line-height:11.9px;color:#2b3648;left:129.60px;letter-spacing:-0.085px;">E:\数据类\CETIM\CETIM-Pasteur\DATA\locationtest1_190924202347823.pra</div>
<div class="t" style="top:604.60px;font-size:8.5px;line-height:11.9px;color:#2b3648;left:426.40px;">撞击总数: 2128</div>
<div class="t" style="top:604.60px;font-size:8.5px;line-height:11.9px;color:#2b3648;left:494.80px;">参数滤波器:</div>
<div class="t" style="top:604.60px;font-size:8.5px;line-height:11.9px;color:#2b3648;left:546.20px;">硬件 - 关闭,</div>
<div class="t" style="top:604.60px;font-size:8.5px;line-height:11.9px;color:#2b3648;left:597.80px;">全局 - 关闭,</div>
<div class="t" style="top:604.60px;font-size:8.5px;line-height:11.9px;color:#2b3648;left:649.00px;">视图 - 关闭.</div>
</div></body></html>
